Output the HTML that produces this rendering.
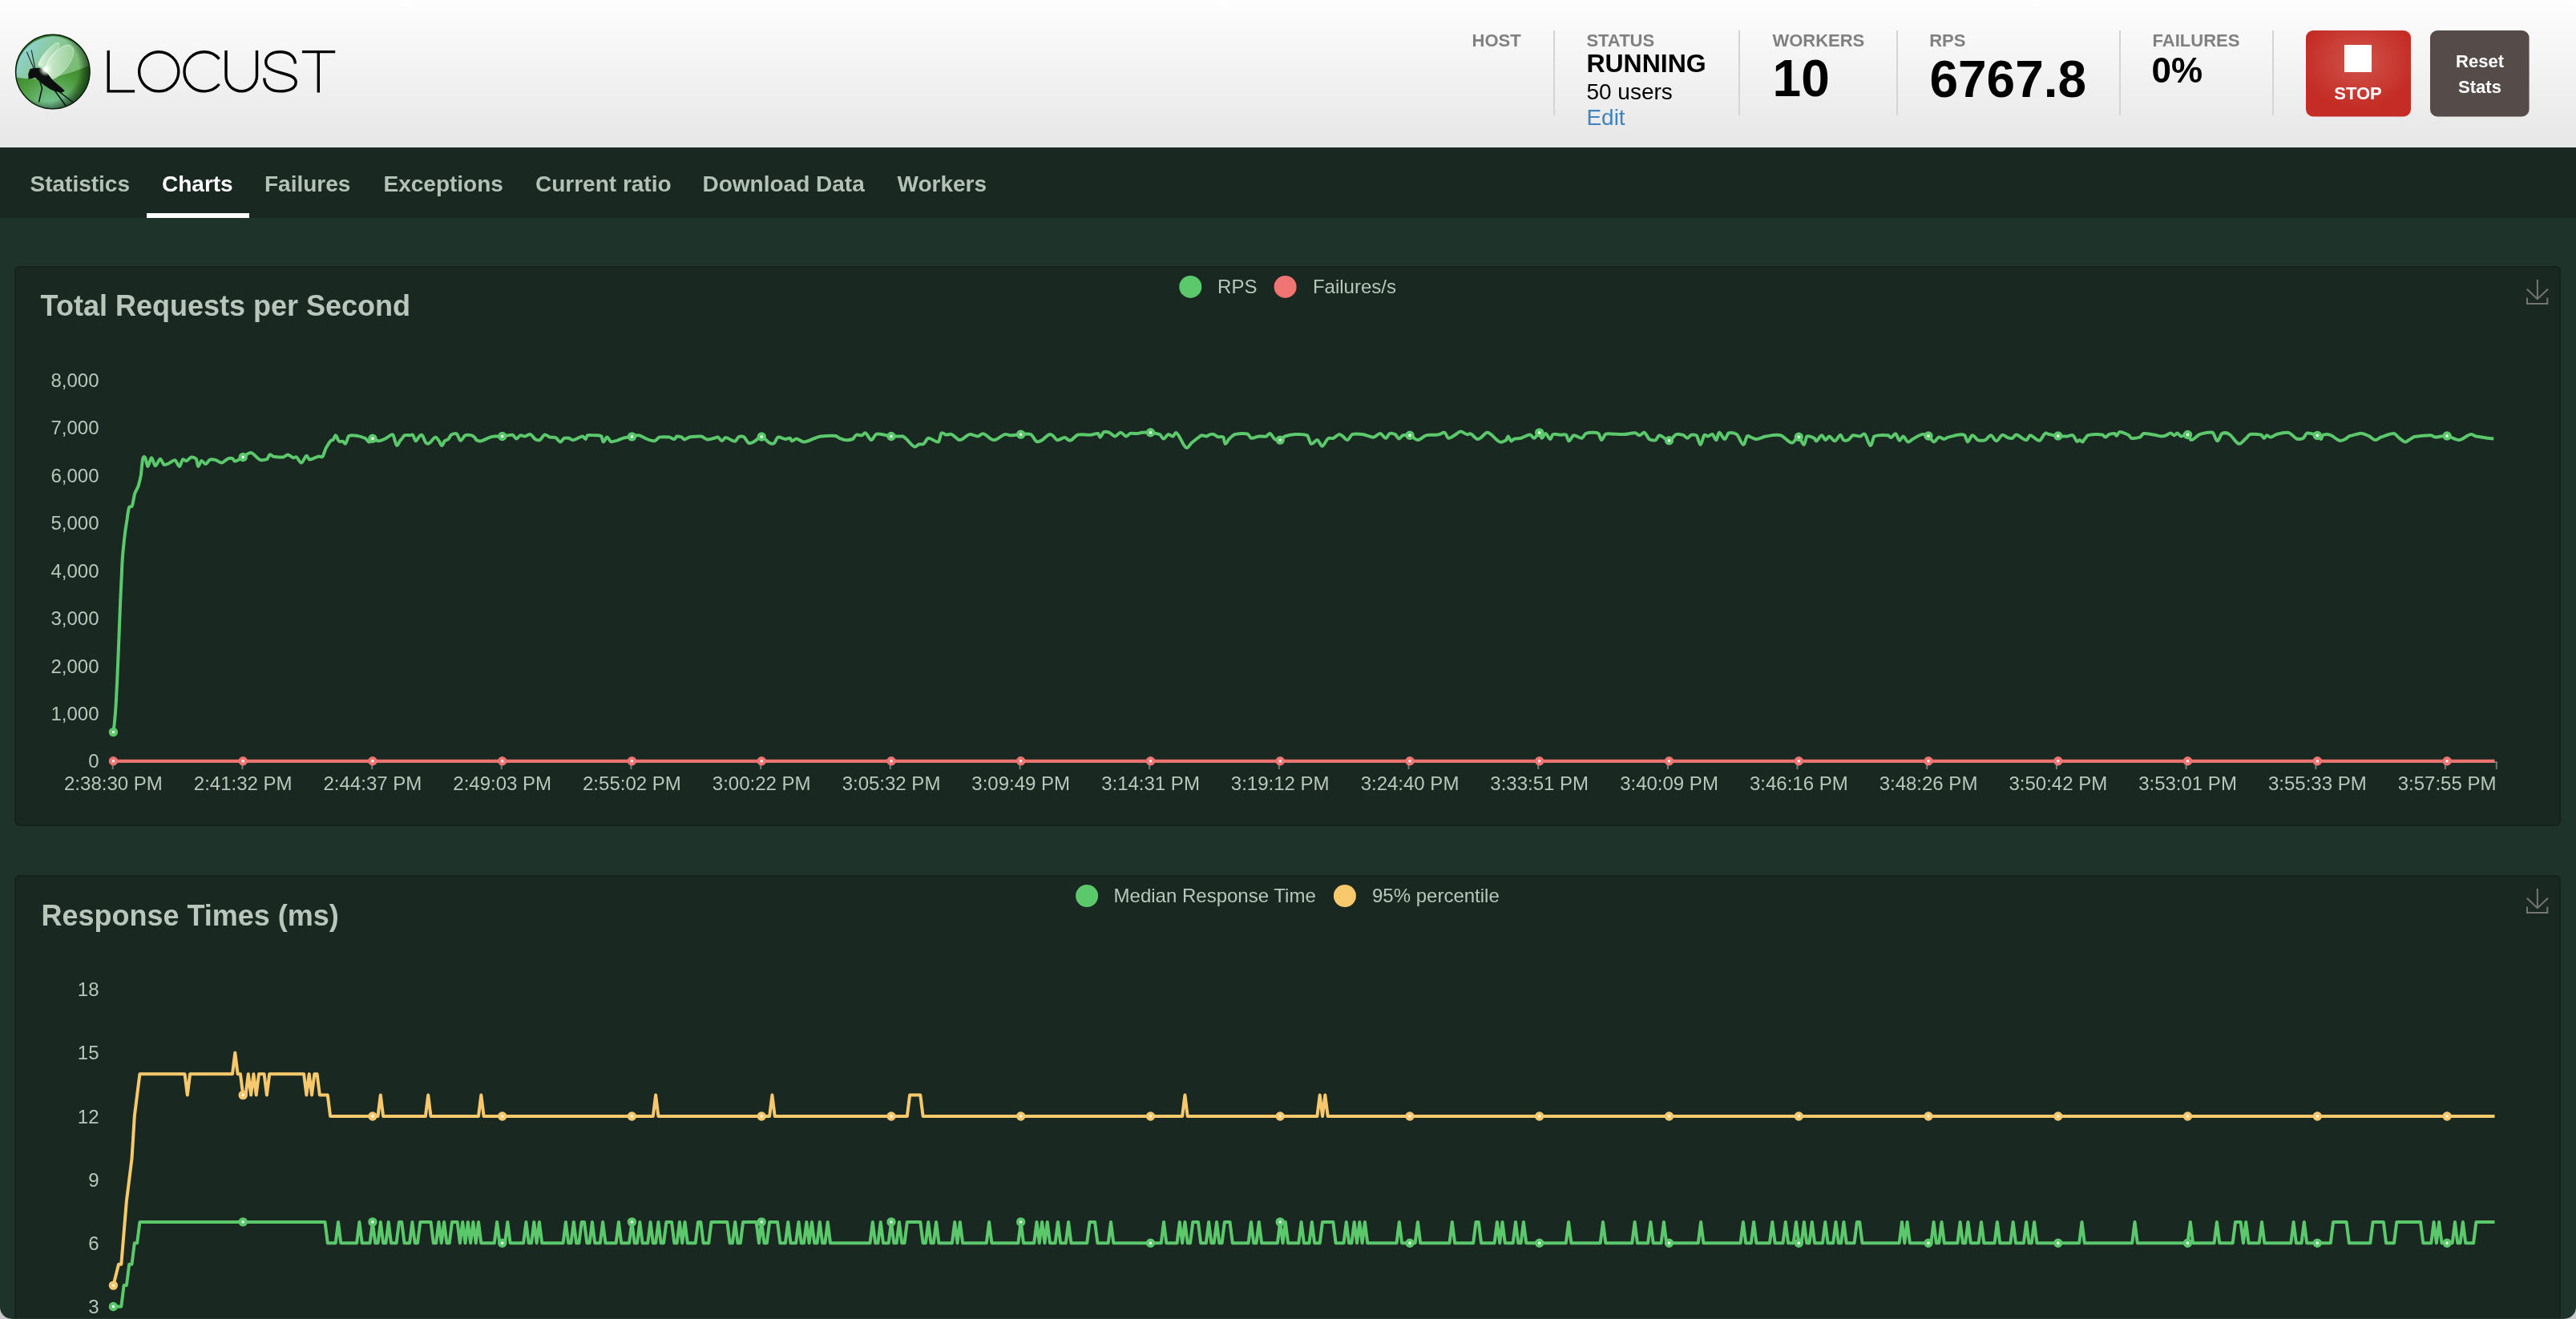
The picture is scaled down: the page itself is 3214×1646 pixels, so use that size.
<!DOCTYPE html><html><head><meta charset="utf-8"><title>Locust</title><style>
html,body{margin:0;padding:0;}
body{width:3214px;height:1646px;overflow:hidden;position:relative;background:#1e332a;font-family:"Liberation Sans",sans-serif;}
.abs{position:absolute;}
svg text{font-family:"Liberation Sans",sans-serif;}
svg{will-change:transform;}
</style></head><body>
<div class="abs" style="left:0;top:0;width:3214px;height:184px;background:linear-gradient(to bottom,#fefefe,#e6e6e6);"></div>
<div class="abs" style="left:0;top:184px;width:3214px;height:88px;background:#1a2822;"></div>
<div class="abs" style="left:18px;top:332px;width:3177px;height:699px;background:#1a2822;border-radius:7px;box-shadow:inset 0 0 0 2px #16231d;"></div>
<div class="abs" style="left:18px;top:1092px;width:3177px;height:700px;background:#1a2822;border-radius:7px;box-shadow:inset 0 0 0 2px #16231d;"></div>
<svg class="abs" style="left:0;top:0" width="3214" height="1646" viewBox="0 0 3214 1646"><defs><radialGradient id="stopg" cx="0.5" cy="0.36" r="0.55"><stop offset="0" stop-color="#d0544b"/><stop offset="1" stop-color="#c42c25"/></radialGradient><radialGradient id="orb" cx="0.35" cy="0.3" r="0.8"><stop offset="0" stop-color="#a8dcc4"/><stop offset="0.45" stop-color="#76c07a"/><stop offset="0.8" stop-color="#3f9a48"/><stop offset="1" stop-color="#2f7a3a"/></radialGradient><linearGradient id="orbhi" x1="0" y1="0" x2="0" y2="1"><stop offset="0" stop-color="#c8f0e8" stop-opacity="0.7"/><stop offset="1" stop-color="#9ad89a" stop-opacity="0.15"/></linearGradient><radialGradient id="wingg" cx="0.3" cy="0.8" r="0.9"><stop offset="0" stop-color="#ffffff" stop-opacity="0.95"/><stop offset="0.5" stop-color="#e6f7e0" stop-opacity="0.55"/><stop offset="1" stop-color="#d0efc8" stop-opacity="0.25"/></radialGradient></defs><defs><radialGradient id="orbBase" cx="0.5" cy="1.0" r="0.7"><stop offset="0" stop-color="#7ccaa0"/><stop offset="0.3" stop-color="#6ab878"/><stop offset="0.65" stop-color="#4e9c3e"/><stop offset="1" stop-color="#3a822c"/></radialGradient><linearGradient id="orbCap" x1="0.05" y1="0.3" x2="0.95" y2="0.7"><stop offset="0" stop-color="#8fd3da"/><stop offset="0.4" stop-color="#8ac99a"/><stop offset="1" stop-color="#74b868"/></linearGradient><radialGradient id="orbEdge" cx="0.4" cy="0.45" r="0.58"><stop offset="0.78" stop-color="#000" stop-opacity="0"/><stop offset="1" stop-color="#06200a" stop-opacity="0.6"/></radialGradient><radialGradient id="glow" cx="0.5" cy="0.5" r="0.5"><stop offset="0" stop-color="#ffffff" stop-opacity="1"/><stop offset="0.3" stop-color="#f4fff2" stop-opacity="0.9"/><stop offset="1" stop-color="#d8f5d0" stop-opacity="0"/></radialGradient><linearGradient id="wing" x1="0" y1="1" x2="0.5" y2="0"><stop offset="0" stop-color="#ffffff" stop-opacity="0.85"/><stop offset="0.55" stop-color="#e6f7e2" stop-opacity="0.55"/><stop offset="1" stop-color="#d6f0d2" stop-opacity="0.35"/></linearGradient></defs><circle cx="65.8" cy="89.5" r="46.5" fill="url(#orbBase)"/><path d="M20.3,96.5 A46.5,46.5 0 0 1 111.9,81.5 Q62,104 20.3,96.5 Z" fill="url(#orbCap)"/><circle cx="65.8" cy="89.5" r="46.5" fill="url(#orbEdge)"/><ellipse cx="60.9" cy="68" rx="5" ry="19" transform="rotate(41 60.9 68)" fill="url(#wing)" stroke="#f0fff0" stroke-opacity="0.55" stroke-width="0.8"/><ellipse cx="73" cy="78" rx="12" ry="26" transform="rotate(38 73 78)" fill="url(#wing)" stroke="#f0fff0" stroke-opacity="0.55" stroke-width="0.8"/><path d="M37.5,86 C42,85 47,84.5 51.4,85.2 C55,86.5 60,92 64.3,98.3 C68,102.5 72,105.5 76,108.8 L80.8,113.2 L77.5,115.4 C74,115 71,114.6 67.5,113.6 C62.5,111.5 59,109 55.5,106.5 C52,104 49.5,101.5 47,99.5 C45.5,98 44.5,97 43.5,96.8 L40,98 L35.5,98.8 L35.3,92 Z" fill="#0d0f0e"/><circle cx="57" cy="86.5" r="9" fill="url(#glow)"/><path d="M42.5,86 L33.3,64.6 M43.8,85.5 L39.2,62.5" stroke="#1c1c2c" stroke-width="1.1" fill="none"/><path d="M49,99 L52.5,110 L48.5,127.5 M68.3,113 L82.5,132.5 M73.3,114 L90.8,127.5" stroke="#101020" stroke-width="1.5" fill="none"/><circle cx="65.8" cy="89.5" r="46.2" fill="none" stroke="#0b1f10" stroke-width="1.5"/><g fill="none" stroke="#000" stroke-width="3.4"><path d="M135.2,63 V113.9 H168.1"/><circle cx="198.2" cy="89.3" r="24.6"/><path d="M273.5,73.6 A24.6,24.6 0 1 0 273.5,105"/><path d="M282,63 V94.6 A19.25,19.25 0 0 0 320.5,94.6 V63"/><path d="M368.3,79.5 C368.3,70 360,64.7 349.5,64.7 C338,64.7 331.7,70.5 331.7,77.5 C331.7,85 338,87.5 349,90.5 C362,94 369.2,96 369.2,102.5 C369.2,110 361,113.9 349.5,113.9 C337,113.9 329.8,107.5 329.8,97.5"/><path d="M376.9,64.6 H418.2 M397.3,63 V115.6"/></g><rect x="1938" y="38" width="2" height="106" fill="#d4d4d4"/><rect x="2169" y="38" width="2" height="106" fill="#d4d4d4"/><rect x="2366" y="38" width="2" height="106" fill="#d4d4d4"/><rect x="2644" y="38" width="2" height="106" fill="#d4d4d4"/><rect x="2835" y="38" width="2" height="106" fill="#d4d4d4"/><text x="1836.5" y="58" font-size="22" font-weight="700" fill="#808080" text-anchor="start" >HOST</text><text x="1979.4" y="58" font-size="22" font-weight="700" fill="#808080" text-anchor="start" >STATUS</text><text x="2211.4" y="58" font-size="22" font-weight="700" fill="#808080" text-anchor="start" >WORKERS</text><text x="2407.2" y="58" font-size="22" font-weight="700" fill="#808080" text-anchor="start" >RPS</text><text x="2685.6" y="58" font-size="22" font-weight="700" fill="#808080" text-anchor="start" >FAILURES</text><text x="1979.4" y="90" font-size="32" font-weight="700" fill="#000" text-anchor="start" >RUNNING</text><text x="1979.4" y="124" font-size="28" font-weight="400" fill="#000" text-anchor="start" >50 users</text><text x="1979.4" y="156" font-size="28" font-weight="400" fill="#3f84bf" text-anchor="start" >Edit</text><text x="2211.6" y="120" font-size="64" font-weight="700" fill="#000" text-anchor="start" >10</text><text x="2407.4" y="120.5" font-size="64" font-weight="700" fill="#000" text-anchor="start" >6767.8</text><text x="2684.6" y="103" font-size="44" font-weight="700" fill="#000" text-anchor="start" >0%</text><rect x="2877" y="38" width="131" height="107.5" rx="9" fill="url(#stopg)"/><rect x="2925" y="56" width="34" height="34" fill="#fff"/><text x="2942" y="124" font-size="22" font-weight="700" fill="#fff" text-anchor="middle" >STOP</text><rect x="3032" y="38" width="123.6" height="107.5" rx="9" fill="#554b49"/><text x="3094" y="84" font-size="22" font-weight="700" fill="#fff" text-anchor="middle" >Reset</text><text x="3094" y="116" font-size="22" font-weight="700" fill="#fff" text-anchor="middle" >Stats</text><text x="37.5" y="238.5" font-size="28" font-weight="700" fill="#b3c1b7" text-anchor="start" >Statistics</text><text x="202" y="238.5" font-size="28" font-weight="700" fill="#fff" text-anchor="start" >Charts</text><text x="330" y="238.5" font-size="28" font-weight="700" fill="#b3c1b7" text-anchor="start" >Failures</text><text x="478.5" y="238.5" font-size="28" font-weight="700" fill="#b3c1b7" text-anchor="start" >Exceptions</text><text x="668" y="238.5" font-size="28" font-weight="700" fill="#b3c1b7" text-anchor="start" >Current ratio</text><text x="876.5" y="238.5" font-size="28" font-weight="700" fill="#b3c1b7" text-anchor="start" >Download Data</text><text x="1119.5" y="238.5" font-size="28" font-weight="700" fill="#b3c1b7" text-anchor="start" >Workers</text><rect x="183" y="266" width="128" height="6" fill="#fff"/><text x="50.6" y="394.2" font-size="36" font-weight="700" fill="#b8c6bc" text-anchor="start" >Total Requests per Second</text><text x="51.4" y="1155" font-size="36" font-weight="700" fill="#b8c6bc" text-anchor="start" >Response Times (ms)</text><circle cx="1485.3" cy="357.9" r="14" fill="#5bc86b"/><text x="1519.1" y="366.1" font-size="24" font-weight="400" fill="#b8c6bc" text-anchor="start" >RPS</text><circle cx="1603.6" cy="357.9" r="14" fill="#ef7472"/><text x="1637.9" y="366.1" font-size="24" font-weight="400" fill="#b8c6bc" text-anchor="start" >Failures/s</text><circle cx="1356.1" cy="1118" r="14" fill="#5bc86b"/><text x="1389.6" y="1126" font-size="24" font-weight="400" fill="#b8c6bc" text-anchor="start" >Median Response Time</text><circle cx="1677.9" cy="1118" r="14" fill="#f7c96c"/><text x="1712" y="1126" font-size="24" font-weight="400" fill="#b8c6bc" text-anchor="start" >95% percentile</text><g fill="none" stroke="#737674" stroke-width="2"><path d="M3165.9,349 V373 M3152.8,360.7 L3165.9,373.2 L3179,360.7 M3153,371.5 V379 H3178.3 V371.5"/></g><g fill="none" stroke="#737674" stroke-width="2"><path d="M3165.9,1109 V1133 M3152.8,1120.7 L3165.9,1133.2 L3179,1120.7 M3153,1131.5 V1139 H3178.3 V1131.5"/></g><text x="123.5" y="958.4" font-size="24" font-weight="400" fill="#b8c6bc" text-anchor="end" >0</text><text x="123.5" y="898.9" font-size="24" font-weight="400" fill="#b8c6bc" text-anchor="end" >1,000</text><text x="123.5" y="839.5" font-size="24" font-weight="400" fill="#b8c6bc" text-anchor="end" >2,000</text><text x="123.5" y="780.0" font-size="24" font-weight="400" fill="#b8c6bc" text-anchor="end" >3,000</text><text x="123.5" y="720.6" font-size="24" font-weight="400" fill="#b8c6bc" text-anchor="end" >4,000</text><text x="123.5" y="661.1" font-size="24" font-weight="400" fill="#b8c6bc" text-anchor="end" >5,000</text><text x="123.5" y="601.7" font-size="24" font-weight="400" fill="#b8c6bc" text-anchor="end" >6,000</text><text x="123.5" y="542.2" font-size="24" font-weight="400" fill="#b8c6bc" text-anchor="end" >7,000</text><text x="123.5" y="482.8" font-size="24" font-weight="400" fill="#b8c6bc" text-anchor="end" >8,000</text><text x="123.5" y="1639.1" font-size="24" font-weight="400" fill="#b8c6bc" text-anchor="end" >3</text><text x="123.5" y="1559.9" font-size="24" font-weight="400" fill="#b8c6bc" text-anchor="end" >6</text><text x="123.5" y="1480.8" font-size="24" font-weight="400" fill="#b8c6bc" text-anchor="end" >9</text><text x="123.5" y="1401.6" font-size="24" font-weight="400" fill="#b8c6bc" text-anchor="end" >12</text><text x="123.5" y="1322.4" font-size="24" font-weight="400" fill="#b8c6bc" text-anchor="end" >15</text><text x="123.5" y="1243.2" font-size="24" font-weight="400" fill="#b8c6bc" text-anchor="end" >18</text><text x="141.4" y="986.3" font-size="24" font-weight="400" fill="#b8c6bc" text-anchor="middle" >2:38:30 PM</text><text x="303.2" y="986.3" font-size="24" font-weight="400" fill="#b8c6bc" text-anchor="middle" >2:41:32 PM</text><text x="464.9" y="986.3" font-size="24" font-weight="400" fill="#b8c6bc" text-anchor="middle" >2:44:37 PM</text><text x="626.7" y="986.3" font-size="24" font-weight="400" fill="#b8c6bc" text-anchor="middle" >2:49:03 PM</text><text x="788.4" y="986.3" font-size="24" font-weight="400" fill="#b8c6bc" text-anchor="middle" >2:55:02 PM</text><text x="950.2" y="986.3" font-size="24" font-weight="400" fill="#b8c6bc" text-anchor="middle" >3:00:22 PM</text><text x="1112.0" y="986.3" font-size="24" font-weight="400" fill="#b8c6bc" text-anchor="middle" >3:05:32 PM</text><text x="1273.7" y="986.3" font-size="24" font-weight="400" fill="#b8c6bc" text-anchor="middle" >3:09:49 PM</text><text x="1435.5" y="986.3" font-size="24" font-weight="400" fill="#b8c6bc" text-anchor="middle" >3:14:31 PM</text><text x="1597.2" y="986.3" font-size="24" font-weight="400" fill="#b8c6bc" text-anchor="middle" >3:19:12 PM</text><text x="1759.0" y="986.3" font-size="24" font-weight="400" fill="#b8c6bc" text-anchor="middle" >3:24:40 PM</text><text x="1920.7" y="986.3" font-size="24" font-weight="400" fill="#b8c6bc" text-anchor="middle" >3:33:51 PM</text><text x="2082.5" y="986.3" font-size="24" font-weight="400" fill="#b8c6bc" text-anchor="middle" >3:40:09 PM</text><text x="2244.3" y="986.3" font-size="24" font-weight="400" fill="#b8c6bc" text-anchor="middle" >3:46:16 PM</text><text x="2406.0" y="986.3" font-size="24" font-weight="400" fill="#b8c6bc" text-anchor="middle" >3:48:26 PM</text><text x="2567.8" y="986.3" font-size="24" font-weight="400" fill="#b8c6bc" text-anchor="middle" >3:50:42 PM</text><text x="2729.5" y="986.3" font-size="24" font-weight="400" fill="#b8c6bc" text-anchor="middle" >3:53:01 PM</text><text x="2891.3" y="986.3" font-size="24" font-weight="400" fill="#b8c6bc" text-anchor="middle" >3:55:33 PM</text><text x="3053.1" y="986.3" font-size="24" font-weight="400" fill="#b8c6bc" text-anchor="middle" >3:57:55 PM</text><rect x="139.4" y="950" width="2976.4" height="2" fill="#6d7a73"/><rect x="139.7" y="951" width="2" height="9" fill="#6d7a73"/><rect x="301.4" y="951" width="2" height="9" fill="#6d7a73"/><rect x="463.1" y="951" width="2" height="9" fill="#6d7a73"/><rect x="624.7" y="951" width="2" height="9" fill="#6d7a73"/><rect x="786.4" y="951" width="2" height="9" fill="#6d7a73"/><rect x="948.1" y="951" width="2" height="9" fill="#6d7a73"/><rect x="1109.8" y="951" width="2" height="9" fill="#6d7a73"/><rect x="1271.5" y="951" width="2" height="9" fill="#6d7a73"/><rect x="1433.1" y="951" width="2" height="9" fill="#6d7a73"/><rect x="1594.8" y="951" width="2" height="9" fill="#6d7a73"/><rect x="1756.5" y="951" width="2" height="9" fill="#6d7a73"/><rect x="1918.2" y="951" width="2" height="9" fill="#6d7a73"/><rect x="2079.9" y="951" width="2" height="9" fill="#6d7a73"/><rect x="2241.5" y="951" width="2" height="9" fill="#6d7a73"/><rect x="2403.2" y="951" width="2" height="9" fill="#6d7a73"/><rect x="2564.9" y="951" width="2" height="9" fill="#6d7a73"/><rect x="2726.6" y="951" width="2" height="9" fill="#6d7a73"/><rect x="2888.3" y="951" width="2" height="9" fill="#6d7a73"/><rect x="3049.9" y="951" width="2" height="9" fill="#6d7a73"/><rect x="3113.8" y="951" width="2" height="9" fill="#6d7a73"/><path d="M141.4,949.7 L3112.5,949.7" fill="none" stroke="#ef7472" stroke-width="4" stroke-linejoin="round" stroke-linecap="butt"/><circle cx="141.4" cy="949.7" r="3.7" fill="#fff" stroke="#ef7472" stroke-width="4"/><circle cx="303.2" cy="949.7" r="3.7" fill="#fff" stroke="#ef7472" stroke-width="4"/><circle cx="464.9" cy="949.7" r="3.7" fill="#fff" stroke="#ef7472" stroke-width="4"/><circle cx="626.7" cy="949.7" r="3.7" fill="#fff" stroke="#ef7472" stroke-width="4"/><circle cx="788.4" cy="949.7" r="3.7" fill="#fff" stroke="#ef7472" stroke-width="4"/><circle cx="950.2" cy="949.7" r="3.7" fill="#fff" stroke="#ef7472" stroke-width="4"/><circle cx="1112.0" cy="949.7" r="3.7" fill="#fff" stroke="#ef7472" stroke-width="4"/><circle cx="1273.7" cy="949.7" r="3.7" fill="#fff" stroke="#ef7472" stroke-width="4"/><circle cx="1435.5" cy="949.7" r="3.7" fill="#fff" stroke="#ef7472" stroke-width="4"/><circle cx="1597.2" cy="949.7" r="3.7" fill="#fff" stroke="#ef7472" stroke-width="4"/><circle cx="1759.0" cy="949.7" r="3.7" fill="#fff" stroke="#ef7472" stroke-width="4"/><circle cx="1920.7" cy="949.7" r="3.7" fill="#fff" stroke="#ef7472" stroke-width="4"/><circle cx="2082.5" cy="949.7" r="3.7" fill="#fff" stroke="#ef7472" stroke-width="4"/><circle cx="2244.3" cy="949.7" r="3.7" fill="#fff" stroke="#ef7472" stroke-width="4"/><circle cx="2406.0" cy="949.7" r="3.7" fill="#fff" stroke="#ef7472" stroke-width="4"/><circle cx="2567.8" cy="949.7" r="3.7" fill="#fff" stroke="#ef7472" stroke-width="4"/><circle cx="2729.5" cy="949.7" r="3.7" fill="#fff" stroke="#ef7472" stroke-width="4"/><circle cx="2891.3" cy="949.7" r="3.7" fill="#fff" stroke="#ef7472" stroke-width="4"/><circle cx="3053.1" cy="949.7" r="3.7" fill="#fff" stroke="#ef7472" stroke-width="4"/><path d="M141.4,913.6 C142.8,904.2 144.2,893.9 145.6,860.0 C147.6,826.1 149.7,752.3 151.7,720.0 C152.7,687.7 153.8,688.0 154.8,675.3 C156.1,662.6 157.4,654.6 158.7,647.3 C159.5,640.0 160.2,636.3 161.0,633.4 C162.3,630.5 163.7,634.0 165.0,631.0 C166.0,628.0 167.0,620.6 168.0,616.3 C169.6,612.0 171.1,610.3 172.7,606.2 C173.7,602.1 174.8,598.8 175.8,593.0 C176.6,587.2 177.3,576.6 178.1,572.8 C179.1,569.0 180.2,569.6 181.2,571.2 C182.2,572.8 183.3,582.1 184.3,582.1 C185.9,582.1 187.4,571.3 189.0,571.2 C190.6,571.1 192.1,581.0 193.7,581.3 C195.8,581.6 197.8,573.1 199.9,572.8 C201.4,572.5 203.0,578.9 204.5,579.8 C206.6,580.7 208.6,579.2 210.7,578.2 C213.3,577.2 215.9,573.6 218.5,574.3 C220.3,575.0 222.1,582.2 223.9,582.1 C225.2,582.0 226.5,574.8 227.8,573.6 C229.4,572.4 230.9,575.6 232.5,575.1 C234.6,574.6 236.6,570.9 238.7,570.5 C240.8,570.1 242.8,570.8 244.9,572.8 C245.7,574.8 246.4,581.7 247.2,582.1 C248.5,582.5 249.8,575.6 251.1,575.1 C252.9,574.6 254.8,579.3 256.6,579.0 C258.4,578.7 260.2,574.4 262.0,573.6 C264.6,572.8 267.2,573.6 269.8,574.3 C272.1,575.0 274.4,577.8 276.7,577.5 C279.0,577.2 281.4,573.8 283.7,572.8 C285.8,571.8 287.8,571.5 289.9,572.0 C290.9,572.5 292.0,575.9 293.0,575.6 C296.4,575.3 299.7,572.4 303.1,570.5 C306.5,568.6 309.8,564.5 313.2,565.0 C316.8,565.5 320.5,572.2 324.1,573.6 C327.2,575.0 330.3,573.9 333.4,572.8 C334.4,571.7 335.5,567.9 336.5,567.4 C338.1,566.9 339.6,569.2 341.2,569.7 C345.3,570.2 349.5,570.9 353.6,570.5 C355.4,570.1 357.2,567.3 359.0,567.4 C361.3,567.5 363.7,570.7 366.0,571.2 C367.3,571.7 368.6,569.4 369.9,570.5 C372.0,571.6 374.0,577.8 376.1,577.5 C378.2,577.2 380.2,569.6 382.3,568.9 C383.6,568.2 384.9,573.5 386.2,573.6 C389.8,573.7 393.5,570.4 397.1,569.7 C398.9,569.0 400.7,571.5 402.5,569.7 C403.8,567.9 405.1,563.0 406.4,559.6 C408.5,556.2 410.5,552.2 412.6,550.3 C413.6,548.4 414.7,549.9 415.7,548.7 C416.7,547.5 417.8,543.0 418.8,543.3 C420.1,543.6 421.4,549.0 422.7,550.3 C424.5,551.6 426.3,550.5 428.1,551.0 C429.1,551.5 430.2,554.6 431.2,553.4 C432.5,552.2 433.8,545.7 435.1,544.1 C439.0,542.5 442.9,543.6 446.8,544.1 C449.9,544.6 453.0,545.9 456.1,547.2 C457.7,548.5 459.2,551.8 460.8,551.8 C462.2,551.8 463.5,547.5 464.9,547.2 C467.1,546.9 469.4,550.0 471.6,550.3 C473.7,550.6 475.7,549.4 477.8,548.7 C479.4,548.0 480.9,547.5 482.5,546.4 C485.1,545.3 487.6,540.9 490.2,542.5 C491.8,544.1 493.3,554.5 494.9,555.7 C496.5,556.9 498.0,550.7 499.6,549.5 C499.7,548.3 499.9,550.2 500.0,549.1 C501.6,548.0 503.1,544.3 504.7,543.3 C507.0,542.3 509.3,543.4 511.6,543.3 C512.8,543.2 514.0,541.6 515.1,542.8 C516.3,544.1 517.5,550.0 518.6,550.3 C520.2,550.6 521.7,545.7 523.3,544.5 C524.5,543.2 525.6,541.9 526.8,543.3 C528.3,544.7 529.9,551.0 531.4,552.6 C533.0,554.2 534.6,553.8 536.1,552.6 C538.4,551.4 540.8,546.0 543.1,545.6 C544.6,545.2 546.2,548.4 547.8,550.3 C548.9,552.1 550.1,556.1 551.2,556.1 C552.4,556.1 553.6,551.7 554.7,550.3 C556.3,548.9 557.8,549.3 559.4,548.0 C560.6,546.6 561.7,543.7 562.9,542.6 C565.2,541.5 567.6,540.2 569.9,541.4 C571.4,542.7 573.0,549.5 574.5,549.8 C576.5,550.1 578.4,544.4 580.4,543.3 C583.1,542.2 585.8,542.9 588.5,543.3 C589.7,543.7 590.8,544.6 592.0,545.6 C592.8,546.6 593.6,548.3 594.3,549.1 C596.3,549.9 598.2,550.9 600.2,550.3 C604.0,549.7 607.9,546.6 611.8,545.6 C614.1,544.6 616.5,544.7 618.8,544.5 C621.5,544.3 624.2,544.7 627.0,544.5 C631.2,544.2 635.5,542.3 639.8,542.8 C641.3,543.4 642.9,547.4 644.4,547.5 C646.0,547.6 647.5,543.8 649.1,543.3 C651.0,542.8 653.0,544.7 654.9,544.5 C657.2,544.3 659.6,541.5 661.9,542.1 C663.8,542.7 665.8,546.7 667.7,548.0 C669.7,549.2 671.6,550.1 673.5,549.1 C675.5,548.2 677.4,543.2 679.4,542.6 C681.7,542.0 684.0,545.0 686.3,545.6 C688.7,546.2 691.0,545.1 693.3,546.1 C695.3,547.1 697.2,551.3 699.2,551.4 C700.7,551.6 702.3,547.6 703.8,546.8 C705.8,546.0 707.7,546.4 709.6,546.8 C711.6,547.2 713.5,549.5 715.5,549.1 C719.3,548.7 723.2,544.7 727.1,544.5 C728.3,544.3 729.4,548.2 730.6,548.0 C731.4,547.7 732.2,544.1 732.9,543.3 C736.0,542.5 739.1,543.1 742.3,543.3 C745.0,543.5 747.7,543.0 750.4,544.5 C751.2,545.9 752.0,551.2 752.7,551.4 C754.3,551.7 755.8,545.7 757.4,545.6 C758.9,545.5 760.5,550.3 762.1,551.0 C764.8,551.7 767.5,550.3 770.2,549.6 C772.5,548.8 774.9,547.6 777.2,546.8 C780.9,546.0 784.6,545.5 788.4,544.9 C791.2,544.3 794.1,542.8 797.0,543.3 C800.5,543.8 804.0,546.7 807.5,548.0 C810.6,549.2 813.7,550.7 816.8,550.3 C818.7,549.9 820.7,546.4 822.6,545.6 C826.9,544.8 831.2,545.2 835.4,545.6 C837.4,546.0 839.3,548.2 841.3,548.0 C842.4,547.7 843.6,544.9 844.7,544.5 C846.7,544.1 848.6,544.9 850.6,545.6 C851.7,546.3 852.9,548.4 854.1,548.4 C856.0,548.4 857.9,546.3 859.9,545.6 C864.9,544.9 870.0,544.0 875.0,544.5 C877.4,544.9 879.7,548.0 882.0,548.4 C885.1,548.8 888.2,547.3 891.3,546.8 C892.9,546.3 894.4,545.0 896.0,545.6 C897.5,546.2 899.1,550.2 900.7,550.3 C902.2,550.4 903.8,546.0 905.3,546.1 C909.2,546.2 913.1,550.9 917.0,550.7 C918.5,550.6 920.1,546.1 921.6,545.2 C923.9,544.3 926.3,544.3 928.6,545.6 C930.3,546.9 932.0,551.6 933.7,552.6 C935.9,553.6 938.1,552.8 940.3,551.4 C943.6,550.1 946.9,544.7 950.3,544.9 C953.5,545.1 956.8,551.2 960.1,552.6 C962.0,554.0 963.9,554.3 965.9,553.1 C967.4,551.9 969.0,546.5 970.5,545.6 C973.6,544.7 976.7,547.7 979.9,548.0 C981.8,548.2 983.7,546.4 985.7,546.8 C986.5,547.2 987.2,550.2 988.0,550.3 C989.9,550.4 991.9,547.3 993.8,547.5 C996.9,547.7 1000.0,551.6 1003.1,551.4 C1007.8,551.3 1012.5,548.0 1017.1,546.8 C1019.5,545.6 1021.8,544.9 1024.1,544.5 C1030.3,544.0 1036.5,543.6 1042.7,544.0 C1044.3,544.4 1045.8,545.9 1047.4,546.8 C1049.7,547.7 1052.1,548.9 1054.4,549.1 C1057.5,549.3 1060.6,549.1 1063.7,548.0 C1065.3,546.9 1066.8,543.6 1068.4,542.8 C1070.7,542.0 1073.0,543.7 1075.4,543.3 C1076.9,542.9 1078.5,539.5 1080.0,540.5 C1082.3,541.5 1084.7,548.8 1087.0,549.1 C1088.9,549.4 1090.9,543.4 1092.8,542.1 C1095.2,540.9 1097.6,541.9 1100.0,542.1 C1101.9,542.3 1103.9,542.9 1105.8,543.3 C1107.8,543.7 1109.7,544.3 1111.6,544.5 C1115.5,544.7 1119.4,544.3 1123.3,544.5 C1124.8,544.7 1126.4,543.4 1128.0,545.6 C1132.2,547.9 1136.5,555.7 1140.8,557.3 C1142.7,558.8 1144.6,555.1 1146.6,554.5 C1148.5,553.9 1150.5,555.1 1152.4,553.8 C1154.4,552.4 1156.3,547.2 1158.2,546.8 C1162.5,546.4 1166.8,552.5 1171.0,551.4 C1172.2,550.3 1173.4,542.0 1174.5,540.5 C1176.5,538.9 1178.4,542.3 1180.4,542.6 C1182.7,542.9 1185.0,541.0 1187.4,542.1 C1190.8,543.3 1194.3,549.1 1197.8,549.1 C1201.7,549.1 1205.6,542.9 1209.5,542.1 C1213.0,541.3 1216.5,544.6 1220.0,544.5 C1222.3,544.3 1224.6,540.6 1227.0,541.4 C1231.2,542.2 1235.5,549.0 1239.8,549.1 C1244.4,549.2 1249.1,543.1 1253.7,542.1 C1256.1,541.1 1258.4,543.3 1260.7,543.3 C1265.0,543.3 1269.3,542.3 1273.5,542.1 C1277.8,541.9 1282.1,540.6 1286.3,542.1 C1288.7,543.7 1291.0,549.8 1293.3,551.0 C1295.7,552.2 1298.0,550.6 1300.3,549.1 C1303.0,547.6 1305.8,543.6 1308.5,542.6 C1310.0,541.6 1311.6,542.2 1313.1,543.3 C1315.1,544.4 1317.0,548.6 1319.0,549.1 C1322.1,549.6 1325.2,546.0 1328.3,546.1 C1330.6,546.2 1332.9,550.2 1335.3,549.6 C1338.4,549.0 1341.5,543.8 1344.6,542.6 C1350.0,541.4 1355.5,543.1 1360.9,542.8 C1364.0,542.5 1367.1,540.5 1370.2,541.0 C1371.0,541.5 1371.8,545.9 1372.5,545.6 C1374.1,545.3 1375.6,540.1 1377.2,539.1 C1379.5,538.1 1381.9,538.9 1384.2,539.8 C1386.5,540.7 1388.8,544.5 1391.2,544.5 C1393.5,544.5 1395.8,539.8 1398.2,539.8 C1400.5,539.8 1402.8,544.3 1405.1,544.5 C1406.7,544.7 1408.3,541.6 1409.8,541.0 C1412.9,540.4 1416.0,541.2 1419.1,541.0 C1421.1,540.8 1423.0,540.0 1424.9,539.8 C1428.4,539.6 1431.9,539.4 1435.4,539.8 C1439.3,540.2 1443.2,540.8 1447.1,542.1 C1448.6,543.5 1450.2,547.5 1451.7,547.5 C1453.7,547.5 1455.6,542.7 1457.6,542.1 C1459.5,541.6 1461.4,544.7 1463.4,544.5 C1464.9,544.2 1466.5,538.1 1468.0,540.5 C1471.9,542.9 1475.8,556.3 1479.7,558.4 C1482.0,560.6 1484.3,554.9 1486.7,552.6 C1489.8,550.4 1492.9,547.3 1496.0,545.6 C1497.2,544.0 1498.3,543.5 1499.5,543.3 C1501.4,543.1 1503.4,544.7 1505.3,544.5 C1506.9,544.3 1508.4,542.5 1510.0,542.1 C1511.5,541.7 1513.1,541.6 1514.6,542.1 C1516.2,542.7 1517.7,544.5 1519.3,545.2 C1521.6,545.8 1523.9,544.1 1526.3,545.6 C1527.1,547.1 1527.8,553.4 1528.6,553.8 C1530.2,554.2 1531.7,550.0 1533.3,548.0 C1535.6,545.9 1537.9,543.3 1540.3,542.1 C1545.7,541.0 1551.1,540.6 1556.6,541.4 C1558.1,542.2 1559.7,546.3 1561.2,546.8 C1564.3,547.3 1567.4,544.9 1570.5,544.5 C1573.6,544.1 1576.7,545.1 1579.9,544.5 C1581.4,543.8 1583.0,540.4 1584.5,541.0 C1586.5,541.6 1588.4,546.5 1590.3,548.0 C1592.7,549.4 1595.0,549.7 1597.3,549.1 C1599.3,548.5 1601.2,545.7 1603.1,544.5 C1607.4,543.2 1611.7,542.3 1616.0,542.1 C1621.0,541.9 1626.1,541.3 1631.1,543.3 C1632.7,545.3 1634.2,552.8 1635.8,553.8 C1638.5,554.8 1641.2,548.6 1643.9,549.1 C1645.8,549.6 1647.8,557.1 1649.7,556.8 C1652.1,556.5 1654.4,549.2 1656.7,547.5 C1659.0,545.7 1661.4,547.7 1663.7,546.8 C1666.0,545.9 1668.4,542.5 1670.7,542.1 C1672.2,541.7 1673.8,543.2 1675.4,544.5 C1677.3,545.7 1679.2,549.5 1681.2,549.1 C1683.1,548.7 1685.1,543.4 1687.0,542.1 C1691.3,540.9 1695.7,541.9 1700.0,542.1 C1701.6,542.3 1703.1,542.7 1704.7,543.3 C1707.8,543.9 1710.9,546.0 1714.0,545.6 C1716.7,545.2 1719.4,540.8 1722.1,541.0 C1724.5,541.2 1726.8,546.8 1729.1,546.8 C1730.7,546.8 1732.2,541.8 1733.8,541.0 C1736.1,540.1 1738.4,541.0 1740.8,542.1 C1742.3,543.3 1743.9,547.3 1745.4,547.5 C1747.0,547.7 1748.5,544.0 1750.1,543.3 C1753.2,542.6 1756.3,542.3 1759.4,543.3 C1762.5,544.3 1765.6,549.1 1768.7,549.1 C1772.2,549.1 1775.7,544.4 1779.2,543.3 C1782.3,542.2 1785.4,543.0 1788.5,542.8 C1790.8,542.6 1793.2,542.7 1795.5,542.1 C1797.8,541.6 1800.2,539.0 1802.5,539.8 C1804.0,540.6 1805.6,546.4 1807.2,546.8 C1810.3,547.2 1813.4,543.6 1816.5,542.1 C1818.4,540.7 1820.4,538.6 1822.3,538.6 C1825.0,538.6 1827.7,541.6 1830.4,542.1 C1832.0,542.6 1833.6,540.5 1835.1,541.4 C1837.4,542.4 1839.8,546.5 1842.1,547.5 C1843.6,548.4 1845.2,548.1 1846.8,546.8 C1849.9,545.4 1853.0,539.0 1856.1,539.8 C1861.1,540.6 1866.2,549.8 1871.2,551.4 C1873.9,553.1 1876.6,550.3 1879.4,549.1 C1880.1,547.9 1880.9,544.3 1881.7,544.5 C1882.9,544.7 1884.0,549.7 1885.2,550.3 C1886.3,550.9 1887.5,548.6 1888.7,548.0 C1891.8,547.3 1894.9,547.4 1898.0,546.8 C1899.5,546.2 1901.1,545.2 1902.7,544.5 C1905.0,543.7 1907.3,542.2 1909.6,542.6 C1911.2,543.0 1912.7,547.3 1914.3,546.8 C1916.5,546.3 1918.7,539.8 1920.8,539.8 C1921.8,539.8 1922.7,546.6 1923.6,546.8 C1925.2,547.0 1926.7,540.8 1928.3,541.0 C1930.2,541.2 1932.2,547.7 1934.1,548.0 C1935.3,548.2 1936.4,543.0 1937.6,542.1 C1940.7,541.2 1943.8,542.7 1946.9,542.8 C1949.2,542.9 1951.6,541.3 1953.9,542.6 C1955.1,543.9 1956.2,550.2 1957.4,550.3 C1959.3,550.4 1961.3,543.9 1963.2,543.3 C1966.7,542.7 1970.2,547.2 1973.7,546.8 C1975.3,546.4 1976.8,542.2 1978.4,541.0 C1981.9,539.7 1985.3,539.7 1988.8,539.8 C1990.8,539.9 1992.7,539.8 1994.7,541.4 C1995.8,543.1 1997.0,549.0 1998.2,549.1 C1999.7,549.2 2001.3,543.5 2002.8,542.1 C2005.1,540.8 2007.5,541.4 2009.8,541.4 C2015.2,541.4 2020.7,542.3 2026.1,542.1 C2030.8,541.9 2035.4,540.1 2040.1,540.3 C2042.0,540.5 2044.0,543.4 2045.9,543.3 C2047.9,543.2 2049.8,539.0 2051.7,539.8 C2053.7,540.6 2055.6,546.3 2057.6,548.0 C2060.3,549.6 2063.0,549.9 2065.7,549.1 C2067.3,548.3 2068.8,543.2 2070.4,543.3 C2074.4,543.4 2078.4,550.0 2082.5,549.8 C2085.4,549.6 2088.4,543.3 2091.3,542.1 C2094.4,541.0 2097.5,542.5 2100.7,543.3 C2102.2,544.1 2103.8,546.9 2105.3,546.8 C2106.9,546.7 2108.4,543.4 2110.0,542.8 C2112.3,542.3 2114.6,541.6 2117.0,543.8 C2118.5,545.9 2120.1,555.0 2121.6,554.9 C2123.2,554.9 2124.7,545.1 2126.3,543.3 C2127.8,541.5 2129.4,544.7 2130.9,544.5 C2132.9,544.3 2134.8,541.3 2136.8,542.1 C2138.3,542.9 2139.9,549.5 2141.4,549.1 C2142.6,548.7 2143.7,540.0 2144.9,539.8 C2147.2,539.6 2149.6,547.8 2151.9,548.0 C2153.5,548.1 2155.0,541.5 2156.6,540.5 C2160.1,539.5 2163.5,539.6 2167.0,542.1 C2169.8,544.7 2172.5,554.5 2175.2,554.9 C2176.7,555.3 2178.3,546.1 2179.9,544.5 C2181.4,542.8 2183.0,545.0 2184.5,545.6 C2186.8,546.2 2189.2,548.2 2191.5,548.0 C2195.4,547.7 2199.3,545.3 2203.1,544.5 C2209.4,543.6 2215.6,541.9 2221.8,543.3 C2226.4,544.7 2231.1,552.3 2235.8,552.6 C2238.6,552.9 2241.3,544.7 2244.1,545.2 C2246.4,545.6 2248.6,555.1 2250.9,554.9 C2252.1,554.8 2253.2,545.9 2254.4,544.5 C2257.5,543.0 2260.6,545.8 2263.7,546.8 C2264.5,547.8 2265.3,550.9 2266.0,550.3 C2268.4,549.7 2270.7,543.5 2273.0,543.3 C2274.6,543.1 2276.1,548.9 2277.7,549.1 C2279.2,549.3 2280.8,544.3 2282.3,544.5 C2284.7,544.7 2287.0,550.6 2289.3,550.3 C2291.7,550.0 2294.0,543.0 2296.3,542.8 C2297.5,542.6 2298.8,548.0 2300.0,549.1 C2301.9,550.2 2303.9,550.1 2305.8,549.1 C2307.8,548.1 2309.7,544.1 2311.6,543.3 C2314.8,542.5 2317.9,544.7 2321.0,544.5 C2322.9,544.3 2324.8,540.1 2326.8,542.1 C2329.1,544.2 2331.4,555.7 2333.8,556.1 C2335.3,556.5 2336.9,546.7 2338.4,544.5 C2344.3,542.2 2350.1,543.0 2355.9,543.3 C2357.1,543.6 2358.2,546.4 2359.4,546.1 C2361.3,545.8 2363.3,540.8 2365.2,541.4 C2366.8,542.1 2368.3,549.3 2369.9,549.8 C2371.4,550.3 2373.0,544.2 2374.5,544.5 C2376.5,544.7 2378.4,550.8 2380.4,551.4 C2382.3,552.1 2384.2,549.6 2386.2,548.0 C2390.1,546.3 2394.0,542.8 2397.8,542.1 C2400.6,541.4 2403.3,542.4 2406.0,544.0 C2408.3,545.6 2410.6,551.2 2413.0,551.4 C2414.9,551.7 2416.9,546.2 2418.8,545.6 C2421.1,545.0 2423.5,548.0 2425.8,548.0 C2427.3,548.0 2428.9,546.6 2430.4,545.6 C2435.1,544.7 2439.8,543.0 2444.4,542.6 C2446.8,542.2 2449.1,541.7 2451.4,543.3 C2452.6,544.8 2453.7,551.4 2454.9,551.4 C2456.8,551.4 2458.8,543.7 2460.7,543.3 C2463.1,542.9 2465.4,548.1 2467.7,549.1 C2470.8,550.1 2473.9,550.1 2477.0,549.1 C2479.4,548.1 2481.7,543.1 2484.0,543.3 C2486.3,543.5 2488.7,550.4 2491.0,550.3 C2493.3,550.2 2495.7,543.6 2498.0,542.8 C2500.3,542.1 2502.7,545.4 2505.0,546.1 C2506.9,546.8 2508.9,547.4 2510.8,546.8 C2512.4,546.2 2513.9,542.2 2515.5,542.6 C2519.7,543.0 2524.0,549.0 2528.3,549.1 C2529.8,549.2 2531.4,543.2 2532.9,543.3 C2536.8,543.4 2540.7,550.2 2544.6,549.8 C2546.9,549.4 2549.2,542.3 2551.6,541.0 C2553.1,539.6 2554.7,541.6 2556.2,542.1 C2560.0,542.7 2563.7,543.6 2567.4,544.0 C2571.4,544.4 2575.5,544.6 2579.5,544.5 C2581.9,544.3 2584.2,542.2 2586.5,543.3 C2588.1,544.4 2589.6,549.7 2591.2,550.7 C2592.3,551.8 2593.5,549.0 2594.7,549.1 C2595.8,549.2 2597.0,551.4 2598.2,551.4 C2598.8,551.4 2599.4,550.5 2600.0,549.1 C2601.6,547.7 2603.1,544.5 2604.7,543.3 C2607.8,542.1 2610.9,542.3 2614.0,542.1 C2617.1,542.0 2620.2,542.0 2623.3,542.6 C2624.5,543.2 2625.6,545.7 2626.8,545.6 C2628.3,545.5 2629.9,542.9 2631.4,542.1 C2633.8,541.3 2636.1,540.7 2638.4,541.0 C2639.2,541.2 2640.0,544.1 2640.8,543.8 C2641.9,543.4 2643.1,539.3 2644.3,539.1 C2648.1,538.9 2652.0,541.5 2655.9,542.8 C2657.1,544.2 2658.2,546.3 2659.4,546.8 C2662.9,547.3 2666.4,546.6 2669.9,545.6 C2671.4,544.6 2673.0,541.5 2674.5,541.0 C2679.2,540.5 2683.9,542.2 2688.5,542.8 C2691.2,543.4 2694.0,544.4 2696.7,544.5 C2698.6,544.5 2700.6,544.0 2702.5,543.3 C2704.4,542.6 2706.4,540.5 2708.3,540.5 C2709.9,540.5 2711.4,543.3 2713.0,543.3 C2714.1,543.3 2715.3,540.3 2716.5,540.5 C2718.0,540.7 2719.6,544.2 2721.1,544.5 C2723.8,544.7 2726.6,541.3 2729.3,542.1 C2730.8,542.9 2732.4,549.1 2733.9,549.1 C2737.4,549.1 2740.9,543.8 2744.4,542.1 C2749.9,540.5 2755.3,538.4 2760.7,539.8 C2762.7,541.2 2764.6,550.1 2766.6,550.3 C2768.5,550.5 2770.4,542.4 2772.4,541.0 C2775.5,539.5 2778.6,539.9 2781.7,542.1 C2785.6,544.4 2789.5,553.0 2793.3,553.8 C2796.4,554.6 2799.5,548.8 2802.7,546.8 C2804.2,544.7 2805.8,542.9 2807.3,542.1 C2812.0,541.4 2816.6,541.8 2821.3,542.6 C2822.5,543.4 2823.6,546.7 2824.8,546.8 C2825.9,546.9 2827.1,543.5 2828.3,543.3 C2829.8,543.1 2831.4,545.8 2832.9,545.6 C2835.3,545.4 2837.6,543.1 2839.9,542.1 C2844.2,541.1 2848.5,540.0 2852.7,539.8 C2854.3,539.6 2855.8,539.6 2857.4,541.0 C2860.1,542.3 2862.8,546.5 2865.5,547.5 C2868.3,548.5 2871.0,548.0 2873.7,546.8 C2875.3,545.6 2876.8,541.1 2878.4,540.5 C2882.6,539.9 2886.9,542.0 2891.2,543.3 C2892.7,544.6 2894.3,548.0 2895.8,548.0 C2896.6,547.9 2897.4,543.7 2898.2,542.8 C2901.3,541.9 2904.4,541.6 2907.5,542.8 C2911.4,544.1 2915.2,548.9 2919.1,549.8 C2921.5,550.7 2923.8,548.9 2926.1,548.0 C2927.7,547.0 2929.2,545.6 2930.8,544.5 C2934.7,543.3 2938.5,542.0 2942.4,541.4 C2944.0,540.8 2945.5,540.4 2947.1,541.0 C2950.2,541.5 2953.3,543.0 2956.4,544.5 C2958.7,545.9 2961.1,548.9 2963.4,549.1 C2965.7,549.3 2968.0,547.0 2970.4,545.6 C2975.8,544.2 2981.2,540.8 2986.7,541.0 C2989.0,541.2 2991.3,545.0 2993.7,546.8 C2996.0,548.6 2998.3,551.0 3000.7,551.4 C3002.2,551.9 3003.8,550.3 3005.3,549.1 C3007.6,548.0 3010.0,545.9 3012.3,544.9 C3019.3,543.9 3026.3,543.2 3033.3,543.3 C3034.8,543.4 3036.4,545.5 3037.9,545.6 C3043.0,545.7 3048.0,543.4 3053.1,544.0 C3058.1,544.6 3063.2,549.4 3068.2,549.1 C3072.9,548.8 3077.5,542.9 3082.2,542.1 C3084.5,541.3 3086.8,543.5 3089.2,544.5 C3096.5,545.4 3103.9,547.0 3111.3,547.5" fill="none" stroke="#5bc86b" stroke-width="4" stroke-linejoin="round" stroke-linecap="butt"/><circle cx="141.4" cy="913.6" r="3.7" fill="#fff" stroke="#5bc86b" stroke-width="4"/><circle cx="303.2" cy="570.5" r="3.7" fill="#fff" stroke="#5bc86b" stroke-width="4"/><circle cx="464.9" cy="547.2" r="3.7" fill="#fff" stroke="#5bc86b" stroke-width="4"/><circle cx="626.7" cy="544.5" r="3.7" fill="#fff" stroke="#5bc86b" stroke-width="4"/><circle cx="788.4" cy="544.9" r="3.7" fill="#fff" stroke="#5bc86b" stroke-width="4"/><circle cx="950.2" cy="545.0" r="3.7" fill="#fff" stroke="#5bc86b" stroke-width="4"/><circle cx="1112.0" cy="544.5" r="3.7" fill="#fff" stroke="#5bc86b" stroke-width="4"/><circle cx="1273.7" cy="542.1" r="3.7" fill="#fff" stroke="#5bc86b" stroke-width="4"/><circle cx="1435.5" cy="539.8" r="3.7" fill="#fff" stroke="#5bc86b" stroke-width="4"/><circle cx="1597.2" cy="549.1" r="3.7" fill="#fff" stroke="#5bc86b" stroke-width="4"/><circle cx="1759.0" cy="543.3" r="3.7" fill="#fff" stroke="#5bc86b" stroke-width="4"/><circle cx="1920.7" cy="539.9" r="3.7" fill="#fff" stroke="#5bc86b" stroke-width="4"/><circle cx="2082.5" cy="549.8" r="3.7" fill="#fff" stroke="#5bc86b" stroke-width="4"/><circle cx="2244.3" cy="545.3" r="3.7" fill="#fff" stroke="#5bc86b" stroke-width="4"/><circle cx="2406.0" cy="544.0" r="3.7" fill="#fff" stroke="#5bc86b" stroke-width="4"/><circle cx="2567.8" cy="544.0" r="3.7" fill="#fff" stroke="#5bc86b" stroke-width="4"/><circle cx="2729.5" cy="542.5" r="3.7" fill="#fff" stroke="#5bc86b" stroke-width="4"/><circle cx="2891.3" cy="543.4" r="3.7" fill="#fff" stroke="#5bc86b" stroke-width="4"/><circle cx="3053.1" cy="544.0" r="3.7" fill="#fff" stroke="#5bc86b" stroke-width="4"/><path d="M141.4,1604.1 L144.7,1590.9 L148.0,1577.7 L151.3,1577.7 L154.6,1538.1 L157.9,1498.5 L161.2,1472.2 L164.5,1445.8 L167.8,1393.0 L171.1,1366.6 L174.4,1340.2 L177.7,1340.2 L181.0,1340.2 L184.3,1340.2 L187.6,1340.2 L190.9,1340.2 L194.2,1340.2 L197.5,1340.2 L200.8,1340.2 L204.1,1340.2 L207.4,1340.2 L210.7,1340.2 L214.0,1340.2 L217.3,1340.2 L220.6,1340.2 L223.9,1340.2 L227.2,1340.2 L230.5,1340.2 L233.8,1366.6 L237.1,1340.2 L240.4,1340.2 L243.7,1340.2 L247.0,1340.2 L250.3,1340.2 L253.6,1340.2 L256.9,1340.2 L260.2,1340.2 L263.5,1340.2 L266.8,1340.2 L270.1,1340.2 L273.4,1340.2 L276.7,1340.2 L280.1,1340.2 L283.4,1340.2 L286.7,1340.2 L290.0,1340.2 L293.3,1313.8 L296.6,1340.2 L299.9,1340.2 L303.2,1366.6 L306.5,1366.6 L309.8,1340.2 L313.1,1366.6 L316.4,1340.2 L319.7,1366.6 L323.0,1340.2 L326.3,1340.2 L329.6,1340.2 L332.9,1366.6 L336.2,1340.2 L339.5,1340.2 L342.8,1340.2 L346.1,1340.2 L349.4,1340.2 L352.7,1340.2 L356.0,1340.2 L359.3,1340.2 L362.6,1340.2 L365.9,1340.2 L369.2,1340.2 L372.5,1340.2 L375.8,1340.2 L379.1,1340.2 L382.4,1366.6 L385.7,1340.2 L389.0,1366.6 L392.3,1340.2 L395.6,1340.2 L398.9,1366.6 L402.2,1366.6 L405.5,1366.6 L408.8,1366.6 L412.1,1393.0 L415.4,1393.0 L418.7,1393.0 L422.0,1393.0 L425.3,1393.0 L428.6,1393.0 L431.9,1393.0 L435.2,1393.0 L438.5,1393.0 L441.8,1393.0 L445.1,1393.0 L448.4,1393.0 L451.7,1393.0 L455.0,1393.0 L458.3,1393.0 L461.6,1393.0 L464.9,1393.0 L468.2,1393.0 L471.5,1393.0 L474.8,1366.6 L478.1,1393.0 L481.4,1393.0 L484.7,1393.0 L488.0,1393.0 L491.3,1393.0 L494.6,1393.0 L497.9,1393.0 L501.2,1393.0 L504.5,1393.0 L507.8,1393.0 L511.1,1393.0 L514.4,1393.0 L517.7,1393.0 L521.0,1393.0 L524.3,1393.0 L527.6,1393.0 L530.9,1393.0 L534.2,1366.6 L537.5,1393.0 L540.8,1393.0 L544.1,1393.0 L547.4,1393.0 L550.7,1393.0 L554.1,1393.0 L557.4,1393.0 L560.7,1393.0 L564.0,1393.0 L567.3,1393.0 L570.6,1393.0 L573.9,1393.0 L577.2,1393.0 L580.5,1393.0 L583.8,1393.0 L587.1,1393.0 L590.4,1393.0 L593.7,1393.0 L597.0,1393.0 L600.3,1366.6 L603.6,1393.0 L606.9,1393.0 L610.2,1393.0 L613.5,1393.0 L616.8,1393.0 L620.1,1393.0 L623.4,1393.0 L626.7,1393.0 L630.0,1393.0 L633.3,1393.0 L636.6,1393.0 L639.9,1393.0 L643.2,1393.0 L646.5,1393.0 L649.8,1393.0 L653.1,1393.0 L656.4,1393.0 L659.7,1393.0 L663.0,1393.0 L666.3,1393.0 L669.6,1393.0 L672.9,1393.0 L676.2,1393.0 L679.5,1393.0 L682.8,1393.0 L686.1,1393.0 L689.4,1393.0 L692.7,1393.0 L696.0,1393.0 L699.3,1393.0 L702.6,1393.0 L705.9,1393.0 L709.2,1393.0 L712.5,1393.0 L715.8,1393.0 L719.1,1393.0 L722.4,1393.0 L725.7,1393.0 L729.0,1393.0 L732.3,1393.0 L735.6,1393.0 L738.9,1393.0 L742.2,1393.0 L745.5,1393.0 L748.8,1393.0 L752.1,1393.0 L755.4,1393.0 L758.7,1393.0 L762.0,1393.0 L765.3,1393.0 L768.6,1393.0 L771.9,1393.0 L775.2,1393.0 L778.5,1393.0 L781.8,1393.0 L785.1,1393.0 L788.4,1393.0 L791.7,1393.0 L795.0,1393.0 L798.3,1393.0 L801.6,1393.0 L804.9,1393.0 L808.2,1393.0 L811.5,1393.0 L814.8,1393.0 L818.1,1366.6 L821.4,1393.0 L824.7,1393.0 L828.0,1393.0 L831.4,1393.0 L834.7,1393.0 L838.0,1393.0 L841.3,1393.0 L844.6,1393.0 L847.9,1393.0 L851.2,1393.0 L854.5,1393.0 L857.8,1393.0 L861.1,1393.0 L864.4,1393.0 L867.7,1393.0 L871.0,1393.0 L874.3,1393.0 L877.6,1393.0 L880.9,1393.0 L884.2,1393.0 L887.5,1393.0 L890.8,1393.0 L894.1,1393.0 L897.4,1393.0 L900.7,1393.0 L904.0,1393.0 L907.3,1393.0 L910.6,1393.0 L913.9,1393.0 L917.2,1393.0 L920.5,1393.0 L923.8,1393.0 L927.1,1393.0 L930.4,1393.0 L933.7,1393.0 L937.0,1393.0 L940.3,1393.0 L943.6,1393.0 L946.9,1393.0 L950.2,1393.0 L953.5,1393.0 L956.8,1393.0 L960.1,1393.0 L963.4,1366.6 L966.7,1393.0 L970.0,1393.0 L973.3,1393.0 L976.6,1393.0 L979.9,1393.0 L983.2,1393.0 L986.5,1393.0 L989.8,1393.0 L993.1,1393.0 L996.4,1393.0 L999.7,1393.0 L1003.0,1393.0 L1006.3,1393.0 L1009.6,1393.0 L1012.9,1393.0 L1016.2,1393.0 L1019.5,1393.0 L1022.8,1393.0 L1026.1,1393.0 L1029.4,1393.0 L1032.7,1393.0 L1036.0,1393.0 L1039.3,1393.0 L1042.6,1393.0 L1045.9,1393.0 L1049.2,1393.0 L1052.5,1393.0 L1055.8,1393.0 L1059.1,1393.0 L1062.4,1393.0 L1065.7,1393.0 L1069.0,1393.0 L1072.3,1393.0 L1075.6,1393.0 L1078.9,1393.0 L1082.2,1393.0 L1085.5,1393.0 L1088.8,1393.0 L1092.1,1393.0 L1095.4,1393.0 L1098.7,1393.0 L1102.0,1393.0 L1105.4,1393.0 L1108.7,1393.0 L1112.0,1393.0 L1115.3,1393.0 L1118.6,1393.0 L1121.9,1393.0 L1125.2,1393.0 L1128.5,1393.0 L1131.8,1393.0 L1135.1,1366.6 L1138.4,1366.6 L1141.7,1366.6 L1145.0,1366.6 L1148.3,1366.6 L1151.6,1393.0 L1154.9,1393.0 L1158.2,1393.0 L1161.5,1393.0 L1164.8,1393.0 L1168.1,1393.0 L1171.4,1393.0 L1174.7,1393.0 L1178.0,1393.0 L1181.3,1393.0 L1184.6,1393.0 L1187.9,1393.0 L1191.2,1393.0 L1194.5,1393.0 L1197.8,1393.0 L1201.1,1393.0 L1204.4,1393.0 L1207.7,1393.0 L1211.0,1393.0 L1214.3,1393.0 L1217.6,1393.0 L1220.9,1393.0 L1224.2,1393.0 L1227.5,1393.0 L1230.8,1393.0 L1234.1,1393.0 L1237.4,1393.0 L1240.7,1393.0 L1244.0,1393.0 L1247.3,1393.0 L1250.6,1393.0 L1253.9,1393.0 L1257.2,1393.0 L1260.5,1393.0 L1263.8,1393.0 L1267.1,1393.0 L1270.4,1393.0 L1273.7,1393.0 L1277.0,1393.0 L1280.3,1393.0 L1283.6,1393.0 L1286.9,1393.0 L1290.2,1393.0 L1293.5,1393.0 L1296.8,1393.0 L1300.1,1393.0 L1303.4,1393.0 L1306.7,1393.0 L1310.0,1393.0 L1313.3,1393.0 L1316.6,1393.0 L1319.9,1393.0 L1323.2,1393.0 L1326.5,1393.0 L1329.8,1393.0 L1333.1,1393.0 L1336.4,1393.0 L1339.7,1393.0 L1343.0,1393.0 L1346.3,1393.0 L1349.6,1393.0 L1352.9,1393.0 L1356.2,1393.0 L1359.5,1393.0 L1362.8,1393.0 L1366.1,1393.0 L1369.4,1393.0 L1372.7,1393.0 L1376.0,1393.0 L1379.4,1393.0 L1382.7,1393.0 L1386.0,1393.0 L1389.3,1393.0 L1392.6,1393.0 L1395.9,1393.0 L1399.2,1393.0 L1402.5,1393.0 L1405.8,1393.0 L1409.1,1393.0 L1412.4,1393.0 L1415.7,1393.0 L1419.0,1393.0 L1422.3,1393.0 L1425.6,1393.0 L1428.9,1393.0 L1432.2,1393.0 L1435.5,1393.0 L1438.8,1393.0 L1442.1,1393.0 L1445.4,1393.0 L1448.7,1393.0 L1452.0,1393.0 L1455.3,1393.0 L1458.6,1393.0 L1461.9,1393.0 L1465.2,1393.0 L1468.5,1393.0 L1471.8,1393.0 L1475.1,1393.0 L1478.4,1366.6 L1481.7,1393.0 L1485.0,1393.0 L1488.3,1393.0 L1491.6,1393.0 L1494.9,1393.0 L1498.2,1393.0 L1501.5,1393.0 L1504.8,1393.0 L1508.1,1393.0 L1511.4,1393.0 L1514.7,1393.0 L1518.0,1393.0 L1521.3,1393.0 L1524.6,1393.0 L1527.9,1393.0 L1531.2,1393.0 L1534.5,1393.0 L1537.8,1393.0 L1541.1,1393.0 L1544.4,1393.0 L1547.7,1393.0 L1551.0,1393.0 L1554.3,1393.0 L1557.6,1393.0 L1560.9,1393.0 L1564.2,1393.0 L1567.5,1393.0 L1570.8,1393.0 L1574.1,1393.0 L1577.4,1393.0 L1580.7,1393.0 L1584.0,1393.0 L1587.3,1393.0 L1590.6,1393.0 L1593.9,1393.0 L1597.2,1393.0 L1600.5,1393.0 L1603.8,1393.0 L1607.1,1393.0 L1610.4,1393.0 L1613.7,1393.0 L1617.0,1393.0 L1620.3,1393.0 L1623.6,1393.0 L1626.9,1393.0 L1630.2,1393.0 L1633.5,1393.0 L1636.8,1393.0 L1640.1,1393.0 L1643.4,1393.0 L1646.7,1366.6 L1650.0,1393.0 L1653.3,1366.6 L1656.7,1393.0 L1660.0,1393.0 L1663.3,1393.0 L1666.6,1393.0 L1669.9,1393.0 L1673.2,1393.0 L1676.5,1393.0 L1679.8,1393.0 L1683.1,1393.0 L1686.4,1393.0 L1689.7,1393.0 L1693.0,1393.0 L1696.3,1393.0 L1699.6,1393.0 L1702.9,1393.0 L1706.2,1393.0 L1709.5,1393.0 L1712.8,1393.0 L1716.1,1393.0 L1719.4,1393.0 L1722.7,1393.0 L1726.0,1393.0 L1729.3,1393.0 L1732.6,1393.0 L1735.9,1393.0 L1739.2,1393.0 L1742.5,1393.0 L1745.8,1393.0 L1749.1,1393.0 L1752.4,1393.0 L1755.7,1393.0 L1759.0,1393.0 L1762.3,1393.0 L1765.6,1393.0 L1768.9,1393.0 L1772.2,1393.0 L1775.5,1393.0 L1778.8,1393.0 L1782.1,1393.0 L1785.4,1393.0 L1788.7,1393.0 L1792.0,1393.0 L1795.3,1393.0 L1798.6,1393.0 L1801.9,1393.0 L1805.2,1393.0 L1808.5,1393.0 L1811.8,1393.0 L1815.1,1393.0 L1818.4,1393.0 L1821.7,1393.0 L1825.0,1393.0 L1828.3,1393.0 L1831.6,1393.0 L1834.9,1393.0 L1838.2,1393.0 L1841.5,1393.0 L1844.8,1393.0 L1848.1,1393.0 L1851.4,1393.0 L1854.7,1393.0 L1858.0,1393.0 L1861.3,1393.0 L1864.6,1393.0 L1867.9,1393.0 L1871.2,1393.0 L1874.5,1393.0 L1877.8,1393.0 L1881.1,1393.0 L1884.4,1393.0 L1887.7,1393.0 L1891.0,1393.0 L1894.3,1393.0 L1897.6,1393.0 L1900.9,1393.0 L1904.2,1393.0 L1907.5,1393.0 L1910.8,1393.0 L1914.1,1393.0 L1917.4,1393.0 L1920.7,1393.0 L1924.0,1393.0 L1927.3,1393.0 L1930.7,1393.0 L1934.0,1393.0 L1937.3,1393.0 L1940.6,1393.0 L1943.9,1393.0 L1947.2,1393.0 L1950.5,1393.0 L1953.8,1393.0 L1957.1,1393.0 L1960.4,1393.0 L1963.7,1393.0 L1967.0,1393.0 L1970.3,1393.0 L1973.6,1393.0 L1976.9,1393.0 L1980.2,1393.0 L1983.5,1393.0 L1986.8,1393.0 L1990.1,1393.0 L1993.4,1393.0 L1996.7,1393.0 L2000.0,1393.0 L2003.3,1393.0 L2006.6,1393.0 L2009.9,1393.0 L2013.2,1393.0 L2016.5,1393.0 L2019.8,1393.0 L2023.1,1393.0 L2026.4,1393.0 L2029.7,1393.0 L2033.0,1393.0 L2036.3,1393.0 L2039.6,1393.0 L2042.9,1393.0 L2046.2,1393.0 L2049.5,1393.0 L2052.8,1393.0 L2056.1,1393.0 L2059.4,1393.0 L2062.7,1393.0 L2066.0,1393.0 L2069.3,1393.0 L2072.6,1393.0 L2075.9,1393.0 L2079.2,1393.0 L2082.5,1393.0 L2085.8,1393.0 L2089.1,1393.0 L2092.4,1393.0 L2095.7,1393.0 L2099.0,1393.0 L2102.3,1393.0 L2105.6,1393.0 L2108.9,1393.0 L2112.2,1393.0 L2115.5,1393.0 L2118.8,1393.0 L2122.1,1393.0 L2125.4,1393.0 L2128.7,1393.0 L2132.0,1393.0 L2135.3,1393.0 L2138.6,1393.0 L2141.9,1393.0 L2145.2,1393.0 L2148.5,1393.0 L2151.8,1393.0 L2155.1,1393.0 L2158.4,1393.0 L2161.7,1393.0 L2165.0,1393.0 L2168.3,1393.0 L2171.6,1393.0 L2174.9,1393.0 L2178.2,1393.0 L2181.5,1393.0 L2184.8,1393.0 L2188.1,1393.0 L2191.4,1393.0 L2194.7,1393.0 L2198.0,1393.0 L2201.3,1393.0 L2204.7,1393.0 L2208.0,1393.0 L2211.3,1393.0 L2214.6,1393.0 L2217.9,1393.0 L2221.2,1393.0 L2224.5,1393.0 L2227.8,1393.0 L2231.1,1393.0 L2234.4,1393.0 L2237.7,1393.0 L2241.0,1393.0 L2244.3,1393.0 L2247.6,1393.0 L2250.9,1393.0 L2254.2,1393.0 L2257.5,1393.0 L2260.8,1393.0 L2264.1,1393.0 L2267.4,1393.0 L2270.7,1393.0 L2274.0,1393.0 L2277.3,1393.0 L2280.6,1393.0 L2283.9,1393.0 L2287.2,1393.0 L2290.5,1393.0 L2293.8,1393.0 L2297.1,1393.0 L2300.4,1393.0 L2303.7,1393.0 L2307.0,1393.0 L2310.3,1393.0 L2313.6,1393.0 L2316.9,1393.0 L2320.2,1393.0 L2323.5,1393.0 L2326.8,1393.0 L2330.1,1393.0 L2333.4,1393.0 L2336.7,1393.0 L2340.0,1393.0 L2343.3,1393.0 L2346.6,1393.0 L2349.9,1393.0 L2353.2,1393.0 L2356.5,1393.0 L2359.8,1393.0 L2363.1,1393.0 L2366.4,1393.0 L2369.7,1393.0 L2373.0,1393.0 L2376.3,1393.0 L2379.6,1393.0 L2382.9,1393.0 L2386.2,1393.0 L2389.5,1393.0 L2392.8,1393.0 L2396.1,1393.0 L2399.4,1393.0 L2402.7,1393.0 L2406.0,1393.0 L2409.3,1393.0 L2412.6,1393.0 L2415.9,1393.0 L2419.2,1393.0 L2422.5,1393.0 L2425.8,1393.0 L2429.1,1393.0 L2432.4,1393.0 L2435.7,1393.0 L2439.0,1393.0 L2442.3,1393.0 L2445.6,1393.0 L2448.9,1393.0 L2452.2,1393.0 L2455.5,1393.0 L2458.8,1393.0 L2462.1,1393.0 L2465.4,1393.0 L2468.7,1393.0 L2472.0,1393.0 L2475.3,1393.0 L2478.6,1393.0 L2482.0,1393.0 L2485.3,1393.0 L2488.6,1393.0 L2491.9,1393.0 L2495.2,1393.0 L2498.5,1393.0 L2501.8,1393.0 L2505.1,1393.0 L2508.4,1393.0 L2511.7,1393.0 L2515.0,1393.0 L2518.3,1393.0 L2521.6,1393.0 L2524.9,1393.0 L2528.2,1393.0 L2531.5,1393.0 L2534.8,1393.0 L2538.1,1393.0 L2541.4,1393.0 L2544.7,1393.0 L2548.0,1393.0 L2551.3,1393.0 L2554.6,1393.0 L2557.9,1393.0 L2561.2,1393.0 L2564.5,1393.0 L2567.8,1393.0 L2571.1,1393.0 L2574.4,1393.0 L2577.7,1393.0 L2581.0,1393.0 L2584.3,1393.0 L2587.6,1393.0 L2590.9,1393.0 L2594.2,1393.0 L2597.5,1393.0 L2600.8,1393.0 L2604.1,1393.0 L2607.4,1393.0 L2610.7,1393.0 L2614.0,1393.0 L2617.3,1393.0 L2620.6,1393.0 L2623.9,1393.0 L2627.2,1393.0 L2630.5,1393.0 L2633.8,1393.0 L2637.1,1393.0 L2640.4,1393.0 L2643.7,1393.0 L2647.0,1393.0 L2650.3,1393.0 L2653.6,1393.0 L2656.9,1393.0 L2660.2,1393.0 L2663.5,1393.0 L2666.8,1393.0 L2670.1,1393.0 L2673.4,1393.0 L2676.7,1393.0 L2680.0,1393.0 L2683.3,1393.0 L2686.6,1393.0 L2689.9,1393.0 L2693.2,1393.0 L2696.5,1393.0 L2699.8,1393.0 L2703.1,1393.0 L2706.4,1393.0 L2709.7,1393.0 L2713.0,1393.0 L2716.3,1393.0 L2719.6,1393.0 L2722.9,1393.0 L2726.2,1393.0 L2729.5,1393.0 L2732.8,1393.0 L2736.1,1393.0 L2739.4,1393.0 L2742.7,1393.0 L2746.0,1393.0 L2749.3,1393.0 L2752.6,1393.0 L2756.0,1393.0 L2759.3,1393.0 L2762.6,1393.0 L2765.9,1393.0 L2769.2,1393.0 L2772.5,1393.0 L2775.8,1393.0 L2779.1,1393.0 L2782.4,1393.0 L2785.7,1393.0 L2789.0,1393.0 L2792.3,1393.0 L2795.6,1393.0 L2798.9,1393.0 L2802.2,1393.0 L2805.5,1393.0 L2808.8,1393.0 L2812.1,1393.0 L2815.4,1393.0 L2818.7,1393.0 L2822.0,1393.0 L2825.3,1393.0 L2828.6,1393.0 L2831.9,1393.0 L2835.2,1393.0 L2838.5,1393.0 L2841.8,1393.0 L2845.1,1393.0 L2848.4,1393.0 L2851.7,1393.0 L2855.0,1393.0 L2858.3,1393.0 L2861.6,1393.0 L2864.9,1393.0 L2868.2,1393.0 L2871.5,1393.0 L2874.8,1393.0 L2878.1,1393.0 L2881.4,1393.0 L2884.7,1393.0 L2888.0,1393.0 L2891.3,1393.0 L2894.6,1393.0 L2897.9,1393.0 L2901.2,1393.0 L2904.5,1393.0 L2907.8,1393.0 L2911.1,1393.0 L2914.4,1393.0 L2917.7,1393.0 L2921.0,1393.0 L2924.3,1393.0 L2927.6,1393.0 L2930.9,1393.0 L2934.2,1393.0 L2937.5,1393.0 L2940.8,1393.0 L2944.1,1393.0 L2947.4,1393.0 L2950.7,1393.0 L2954.0,1393.0 L2957.3,1393.0 L2960.6,1393.0 L2963.9,1393.0 L2967.2,1393.0 L2970.5,1393.0 L2973.8,1393.0 L2977.1,1393.0 L2980.4,1393.0 L2983.7,1393.0 L2987.0,1393.0 L2990.3,1393.0 L2993.6,1393.0 L2996.9,1393.0 L3000.2,1393.0 L3003.5,1393.0 L3006.8,1393.0 L3010.1,1393.0 L3013.4,1393.0 L3016.7,1393.0 L3020.0,1393.0 L3023.3,1393.0 L3026.6,1393.0 L3030.0,1393.0 L3033.3,1393.0 L3036.6,1393.0 L3039.9,1393.0 L3043.2,1393.0 L3046.5,1393.0 L3049.8,1393.0 L3053.1,1393.0 L3056.4,1393.0 L3059.7,1393.0 L3063.0,1393.0 L3066.3,1393.0 L3069.6,1393.0 L3072.9,1393.0 L3076.2,1393.0 L3079.5,1393.0 L3082.8,1393.0 L3086.1,1393.0 L3089.4,1393.0 L3092.7,1393.0 L3096.0,1393.0 L3099.3,1393.0 L3102.6,1393.0 L3105.9,1393.0 L3109.2,1393.0 L3112.5,1393.0" fill="none" stroke="#f7c96c" stroke-width="4" stroke-linejoin="round" stroke-linecap="butt"/><circle cx="141.4" cy="1604.1" r="3.7" fill="#fff" stroke="#f7c96c" stroke-width="4"/><circle cx="303.2" cy="1366.6" r="3.7" fill="#fff" stroke="#f7c96c" stroke-width="4"/><circle cx="464.9" cy="1393.0" r="3.7" fill="#fff" stroke="#f7c96c" stroke-width="4"/><circle cx="626.7" cy="1393.0" r="3.7" fill="#fff" stroke="#f7c96c" stroke-width="4"/><circle cx="788.4" cy="1393.0" r="3.7" fill="#fff" stroke="#f7c96c" stroke-width="4"/><circle cx="950.2" cy="1393.0" r="3.7" fill="#fff" stroke="#f7c96c" stroke-width="4"/><circle cx="1112.0" cy="1393.0" r="3.7" fill="#fff" stroke="#f7c96c" stroke-width="4"/><circle cx="1273.7" cy="1393.0" r="3.7" fill="#fff" stroke="#f7c96c" stroke-width="4"/><circle cx="1435.5" cy="1393.0" r="3.7" fill="#fff" stroke="#f7c96c" stroke-width="4"/><circle cx="1597.2" cy="1393.0" r="3.7" fill="#fff" stroke="#f7c96c" stroke-width="4"/><circle cx="1759.0" cy="1393.0" r="3.7" fill="#fff" stroke="#f7c96c" stroke-width="4"/><circle cx="1920.7" cy="1393.0" r="3.7" fill="#fff" stroke="#f7c96c" stroke-width="4"/><circle cx="2082.5" cy="1393.0" r="3.7" fill="#fff" stroke="#f7c96c" stroke-width="4"/><circle cx="2244.3" cy="1393.0" r="3.7" fill="#fff" stroke="#f7c96c" stroke-width="4"/><circle cx="2406.0" cy="1393.0" r="3.7" fill="#fff" stroke="#f7c96c" stroke-width="4"/><circle cx="2567.8" cy="1393.0" r="3.7" fill="#fff" stroke="#f7c96c" stroke-width="4"/><circle cx="2729.5" cy="1393.0" r="3.7" fill="#fff" stroke="#f7c96c" stroke-width="4"/><circle cx="2891.3" cy="1393.0" r="3.7" fill="#fff" stroke="#f7c96c" stroke-width="4"/><circle cx="3053.1" cy="1393.0" r="3.7" fill="#fff" stroke="#f7c96c" stroke-width="4"/><path d="M141.4,1630.5 L144.7,1630.5 L148.0,1630.5 L151.3,1630.5 L154.6,1604.1 L157.9,1604.1 L161.2,1577.7 L164.5,1577.7 L167.8,1551.3 L171.1,1551.3 L174.4,1524.9 L177.7,1524.9 L181.0,1524.9 L184.3,1524.9 L187.6,1524.9 L190.9,1524.9 L194.2,1524.9 L197.5,1524.9 L200.8,1524.9 L204.1,1524.9 L207.4,1524.9 L210.7,1524.9 L214.0,1524.9 L217.3,1524.9 L220.6,1524.9 L223.9,1524.9 L227.2,1524.9 L230.5,1524.9 L233.8,1524.9 L237.1,1524.9 L240.4,1524.9 L243.7,1524.9 L247.0,1524.9 L250.3,1524.9 L253.6,1524.9 L256.9,1524.9 L260.2,1524.9 L263.5,1524.9 L266.8,1524.9 L270.1,1524.9 L273.4,1524.9 L276.7,1524.9 L280.1,1524.9 L283.4,1524.9 L286.7,1524.9 L290.0,1524.9 L293.3,1524.9 L296.6,1524.9 L299.9,1524.9 L303.2,1524.9 L306.5,1524.9 L309.8,1524.9 L313.1,1524.9 L316.4,1524.9 L319.7,1524.9 L323.0,1524.9 L326.3,1524.9 L329.6,1524.9 L332.9,1524.9 L336.2,1524.9 L339.5,1524.9 L342.8,1524.9 L346.1,1524.9 L349.4,1524.9 L352.7,1524.9 L356.0,1524.9 L359.3,1524.9 L362.6,1524.9 L365.9,1524.9 L369.2,1524.9 L372.5,1524.9 L375.8,1524.9 L379.1,1524.9 L382.4,1524.9 L385.7,1524.9 L389.0,1524.9 L392.3,1524.9 L395.6,1524.9 L398.9,1524.9 L402.2,1524.9 L405.5,1524.9 L408.8,1551.3 L412.1,1551.3 L415.4,1551.3 L418.7,1551.3 L422.0,1524.9 L425.3,1551.3 L428.6,1551.3 L431.9,1551.3 L435.2,1551.3 L438.5,1551.3 L441.8,1551.3 L445.1,1551.3 L448.4,1524.9 L451.7,1551.3 L455.0,1551.3 L458.3,1551.3 L461.6,1551.3 L464.9,1524.9 L468.2,1551.3 L471.5,1551.3 L474.8,1524.9 L478.1,1551.3 L481.4,1551.3 L484.7,1524.9 L488.0,1551.3 L491.3,1551.3 L494.6,1551.3 L497.9,1524.9 L501.2,1524.9 L504.5,1551.3 L507.8,1551.3 L511.1,1551.3 L514.4,1524.9 L517.7,1551.3 L521.0,1551.3 L524.3,1524.9 L527.6,1524.9 L530.9,1524.9 L534.2,1524.9 L537.5,1524.9 L540.8,1551.3 L544.1,1551.3 L547.4,1524.9 L550.7,1551.3 L554.1,1524.9 L557.4,1551.3 L560.7,1551.3 L564.0,1524.9 L567.3,1524.9 L570.6,1524.9 L573.9,1551.3 L577.2,1524.9 L580.5,1551.3 L583.8,1524.9 L587.1,1551.3 L590.4,1524.9 L593.7,1551.3 L597.0,1524.9 L600.3,1551.3 L603.6,1551.3 L606.9,1551.3 L610.2,1551.3 L613.5,1551.3 L616.8,1551.3 L620.1,1524.9 L623.4,1551.3 L626.7,1551.3 L630.0,1551.3 L633.3,1524.9 L636.6,1551.3 L639.9,1551.3 L643.2,1551.3 L646.5,1551.3 L649.8,1551.3 L653.1,1551.3 L656.4,1524.9 L659.7,1551.3 L663.0,1551.3 L666.3,1524.9 L669.6,1551.3 L672.9,1524.9 L676.2,1551.3 L679.5,1551.3 L682.8,1551.3 L686.1,1551.3 L689.4,1551.3 L692.7,1551.3 L696.0,1551.3 L699.3,1551.3 L702.6,1551.3 L705.9,1524.9 L709.2,1551.3 L712.5,1551.3 L715.8,1524.9 L719.1,1551.3 L722.4,1551.3 L725.7,1524.9 L729.0,1524.9 L732.3,1551.3 L735.6,1551.3 L738.9,1524.9 L742.2,1551.3 L745.5,1551.3 L748.8,1551.3 L752.1,1524.9 L755.4,1551.3 L758.7,1551.3 L762.0,1551.3 L765.3,1551.3 L768.6,1551.3 L771.9,1524.9 L775.2,1551.3 L778.5,1551.3 L781.8,1551.3 L785.1,1551.3 L788.4,1524.9 L791.7,1551.3 L795.0,1551.3 L798.3,1524.9 L801.6,1551.3 L804.9,1551.3 L808.2,1551.3 L811.5,1524.9 L814.8,1551.3 L818.1,1551.3 L821.4,1524.9 L824.7,1551.3 L828.0,1551.3 L831.4,1524.9 L834.7,1524.9 L838.0,1524.9 L841.3,1551.3 L844.6,1551.3 L847.9,1524.9 L851.2,1551.3 L854.5,1524.9 L857.8,1551.3 L861.1,1551.3 L864.4,1551.3 L867.7,1551.3 L871.0,1524.9 L874.3,1524.9 L877.6,1551.3 L880.9,1551.3 L884.2,1551.3 L887.5,1524.9 L890.8,1524.9 L894.1,1524.9 L897.4,1524.9 L900.7,1524.9 L904.0,1524.9 L907.3,1524.9 L910.6,1551.3 L913.9,1551.3 L917.2,1524.9 L920.5,1551.3 L923.8,1551.3 L927.1,1524.9 L930.4,1524.9 L933.7,1524.9 L937.0,1524.9 L940.3,1524.9 L943.6,1524.9 L946.9,1551.3 L950.2,1524.9 L953.5,1551.3 L956.8,1551.3 L960.1,1524.9 L963.4,1524.9 L966.7,1524.9 L970.0,1524.9 L973.3,1551.3 L976.6,1551.3 L979.9,1551.3 L983.2,1524.9 L986.5,1551.3 L989.8,1551.3 L993.1,1551.3 L996.4,1524.9 L999.7,1551.3 L1003.0,1551.3 L1006.3,1524.9 L1009.6,1551.3 L1012.9,1524.9 L1016.2,1551.3 L1019.5,1551.3 L1022.8,1524.9 L1026.1,1551.3 L1029.4,1551.3 L1032.7,1524.9 L1036.0,1551.3 L1039.3,1551.3 L1042.6,1551.3 L1045.9,1551.3 L1049.2,1551.3 L1052.5,1551.3 L1055.8,1551.3 L1059.1,1551.3 L1062.4,1551.3 L1065.7,1551.3 L1069.0,1551.3 L1072.3,1551.3 L1075.6,1551.3 L1078.9,1551.3 L1082.2,1551.3 L1085.5,1551.3 L1088.8,1524.9 L1092.1,1551.3 L1095.4,1551.3 L1098.7,1524.9 L1102.0,1551.3 L1105.4,1551.3 L1108.7,1551.3 L1112.0,1524.9 L1115.3,1551.3 L1118.6,1551.3 L1121.9,1524.9 L1125.2,1551.3 L1128.5,1551.3 L1131.8,1524.9 L1135.1,1524.9 L1138.4,1524.9 L1141.7,1524.9 L1145.0,1524.9 L1148.3,1524.9 L1151.6,1551.3 L1154.9,1551.3 L1158.2,1524.9 L1161.5,1551.3 L1164.8,1551.3 L1168.1,1524.9 L1171.4,1551.3 L1174.7,1551.3 L1178.0,1551.3 L1181.3,1551.3 L1184.6,1551.3 L1187.9,1551.3 L1191.2,1524.9 L1194.5,1551.3 L1197.8,1524.9 L1201.1,1551.3 L1204.4,1551.3 L1207.7,1551.3 L1211.0,1551.3 L1214.3,1551.3 L1217.6,1551.3 L1220.9,1551.3 L1224.2,1551.3 L1227.5,1551.3 L1230.8,1551.3 L1234.1,1524.9 L1237.4,1551.3 L1240.7,1551.3 L1244.0,1551.3 L1247.3,1551.3 L1250.6,1551.3 L1253.9,1551.3 L1257.2,1551.3 L1260.5,1551.3 L1263.8,1551.3 L1267.1,1551.3 L1270.4,1551.3 L1273.7,1524.9 L1277.0,1551.3 L1280.3,1551.3 L1283.6,1551.3 L1286.9,1551.3 L1290.2,1551.3 L1293.5,1524.9 L1296.8,1551.3 L1300.1,1524.9 L1303.4,1551.3 L1306.7,1524.9 L1310.0,1551.3 L1313.3,1551.3 L1316.6,1551.3 L1319.9,1524.9 L1323.2,1551.3 L1326.5,1551.3 L1329.8,1551.3 L1333.1,1524.9 L1336.4,1551.3 L1339.7,1551.3 L1343.0,1551.3 L1346.3,1551.3 L1349.6,1551.3 L1352.9,1551.3 L1356.2,1551.3 L1359.5,1524.9 L1362.8,1524.9 L1366.1,1524.9 L1369.4,1551.3 L1372.7,1551.3 L1376.0,1551.3 L1379.4,1551.3 L1382.7,1551.3 L1386.0,1524.9 L1389.3,1551.3 L1392.6,1551.3 L1395.9,1551.3 L1399.2,1551.3 L1402.5,1551.3 L1405.8,1551.3 L1409.1,1551.3 L1412.4,1551.3 L1415.7,1551.3 L1419.0,1551.3 L1422.3,1551.3 L1425.6,1551.3 L1428.9,1551.3 L1432.2,1551.3 L1435.5,1551.3 L1438.8,1551.3 L1442.1,1551.3 L1445.4,1551.3 L1448.7,1551.3 L1452.0,1524.9 L1455.3,1551.3 L1458.6,1551.3 L1461.9,1551.3 L1465.2,1551.3 L1468.5,1551.3 L1471.8,1524.9 L1475.1,1551.3 L1478.4,1524.9 L1481.7,1551.3 L1485.0,1551.3 L1488.3,1524.9 L1491.6,1524.9 L1494.9,1524.9 L1498.2,1551.3 L1501.5,1551.3 L1504.8,1551.3 L1508.1,1524.9 L1511.4,1551.3 L1514.7,1551.3 L1518.0,1524.9 L1521.3,1551.3 L1524.6,1551.3 L1527.9,1524.9 L1531.2,1524.9 L1534.5,1524.9 L1537.8,1551.3 L1541.1,1551.3 L1544.4,1551.3 L1547.7,1551.3 L1551.0,1551.3 L1554.3,1551.3 L1557.6,1551.3 L1560.9,1524.9 L1564.2,1551.3 L1567.5,1551.3 L1570.8,1524.9 L1574.1,1551.3 L1577.4,1551.3 L1580.7,1551.3 L1584.0,1551.3 L1587.3,1551.3 L1590.6,1551.3 L1593.9,1551.3 L1597.2,1524.9 L1600.5,1551.3 L1603.8,1524.9 L1607.1,1551.3 L1610.4,1551.3 L1613.7,1551.3 L1617.0,1551.3 L1620.3,1551.3 L1623.6,1524.9 L1626.9,1551.3 L1630.2,1551.3 L1633.5,1551.3 L1636.8,1524.9 L1640.1,1551.3 L1643.4,1551.3 L1646.7,1551.3 L1650.0,1524.9 L1653.3,1524.9 L1656.7,1524.9 L1660.0,1524.9 L1663.3,1524.9 L1666.6,1551.3 L1669.9,1551.3 L1673.2,1551.3 L1676.5,1551.3 L1679.8,1524.9 L1683.1,1551.3 L1686.4,1551.3 L1689.7,1524.9 L1693.0,1551.3 L1696.3,1524.9 L1699.6,1551.3 L1702.9,1524.9 L1706.2,1551.3 L1709.5,1551.3 L1712.8,1551.3 L1716.1,1551.3 L1719.4,1551.3 L1722.7,1551.3 L1726.0,1551.3 L1729.3,1551.3 L1732.6,1551.3 L1735.9,1551.3 L1739.2,1551.3 L1742.5,1551.3 L1745.8,1524.9 L1749.1,1551.3 L1752.4,1551.3 L1755.7,1551.3 L1759.0,1551.3 L1762.3,1551.3 L1765.6,1551.3 L1768.9,1524.9 L1772.2,1551.3 L1775.5,1551.3 L1778.8,1551.3 L1782.1,1551.3 L1785.4,1551.3 L1788.7,1551.3 L1792.0,1551.3 L1795.3,1551.3 L1798.6,1551.3 L1801.9,1551.3 L1805.2,1551.3 L1808.5,1551.3 L1811.8,1524.9 L1815.1,1551.3 L1818.4,1551.3 L1821.7,1551.3 L1825.0,1551.3 L1828.3,1551.3 L1831.6,1551.3 L1834.9,1551.3 L1838.2,1551.3 L1841.5,1524.9 L1844.8,1524.9 L1848.1,1551.3 L1851.4,1551.3 L1854.7,1551.3 L1858.0,1551.3 L1861.3,1551.3 L1864.6,1551.3 L1867.9,1524.9 L1871.2,1551.3 L1874.5,1524.9 L1877.8,1551.3 L1881.1,1551.3 L1884.4,1551.3 L1887.7,1551.3 L1891.0,1524.9 L1894.3,1551.3 L1897.6,1551.3 L1900.9,1524.9 L1904.2,1551.3 L1907.5,1551.3 L1910.8,1551.3 L1914.1,1551.3 L1917.4,1551.3 L1920.7,1551.3 L1924.0,1551.3 L1927.3,1551.3 L1930.7,1551.3 L1934.0,1551.3 L1937.3,1551.3 L1940.6,1551.3 L1943.9,1551.3 L1947.2,1551.3 L1950.5,1551.3 L1953.8,1551.3 L1957.1,1524.9 L1960.4,1551.3 L1963.7,1551.3 L1967.0,1551.3 L1970.3,1551.3 L1973.6,1551.3 L1976.9,1551.3 L1980.2,1551.3 L1983.5,1551.3 L1986.8,1551.3 L1990.1,1551.3 L1993.4,1551.3 L1996.7,1551.3 L2000.0,1524.9 L2003.3,1551.3 L2006.6,1551.3 L2009.9,1551.3 L2013.2,1551.3 L2016.5,1551.3 L2019.8,1551.3 L2023.1,1551.3 L2026.4,1551.3 L2029.7,1551.3 L2033.0,1551.3 L2036.3,1551.3 L2039.6,1524.9 L2042.9,1551.3 L2046.2,1551.3 L2049.5,1551.3 L2052.8,1551.3 L2056.1,1551.3 L2059.4,1524.9 L2062.7,1551.3 L2066.0,1551.3 L2069.3,1551.3 L2072.6,1551.3 L2075.9,1524.9 L2079.2,1551.3 L2082.5,1551.3 L2085.8,1551.3 L2089.1,1551.3 L2092.4,1551.3 L2095.7,1551.3 L2099.0,1551.3 L2102.3,1551.3 L2105.6,1551.3 L2108.9,1551.3 L2112.2,1551.3 L2115.5,1551.3 L2118.8,1551.3 L2122.1,1524.9 L2125.4,1551.3 L2128.7,1551.3 L2132.0,1551.3 L2135.3,1551.3 L2138.6,1551.3 L2141.9,1551.3 L2145.2,1551.3 L2148.5,1551.3 L2151.8,1551.3 L2155.1,1551.3 L2158.4,1551.3 L2161.7,1551.3 L2165.0,1551.3 L2168.3,1551.3 L2171.6,1551.3 L2174.9,1524.9 L2178.2,1551.3 L2181.5,1551.3 L2184.8,1551.3 L2188.1,1524.9 L2191.4,1551.3 L2194.7,1551.3 L2198.0,1551.3 L2201.3,1551.3 L2204.7,1551.3 L2208.0,1551.3 L2211.3,1524.9 L2214.6,1551.3 L2217.9,1551.3 L2221.2,1551.3 L2224.5,1551.3 L2227.8,1524.9 L2231.1,1551.3 L2234.4,1551.3 L2237.7,1551.3 L2241.0,1524.9 L2244.3,1551.3 L2247.6,1551.3 L2250.9,1524.9 L2254.2,1551.3 L2257.5,1551.3 L2260.8,1524.9 L2264.1,1551.3 L2267.4,1551.3 L2270.7,1551.3 L2274.0,1551.3 L2277.3,1524.9 L2280.6,1551.3 L2283.9,1551.3 L2287.2,1551.3 L2290.5,1524.9 L2293.8,1551.3 L2297.1,1551.3 L2300.4,1524.9 L2303.7,1551.3 L2307.0,1551.3 L2310.3,1551.3 L2313.6,1551.3 L2316.9,1524.9 L2320.2,1524.9 L2323.5,1551.3 L2326.8,1551.3 L2330.1,1551.3 L2333.4,1551.3 L2336.7,1551.3 L2340.0,1551.3 L2343.3,1551.3 L2346.6,1551.3 L2349.9,1551.3 L2353.2,1551.3 L2356.5,1551.3 L2359.8,1551.3 L2363.1,1551.3 L2366.4,1551.3 L2369.7,1551.3 L2373.0,1524.9 L2376.3,1551.3 L2379.6,1524.9 L2382.9,1551.3 L2386.2,1551.3 L2389.5,1551.3 L2392.8,1551.3 L2396.1,1551.3 L2399.4,1551.3 L2402.7,1551.3 L2406.0,1551.3 L2409.3,1551.3 L2412.6,1524.9 L2415.9,1551.3 L2419.2,1551.3 L2422.5,1524.9 L2425.8,1551.3 L2429.1,1551.3 L2432.4,1551.3 L2435.7,1551.3 L2439.0,1551.3 L2442.3,1551.3 L2445.6,1524.9 L2448.9,1551.3 L2452.2,1551.3 L2455.5,1524.9 L2458.8,1551.3 L2462.1,1551.3 L2465.4,1551.3 L2468.7,1551.3 L2472.0,1524.9 L2475.3,1551.3 L2478.6,1551.3 L2482.0,1551.3 L2485.3,1551.3 L2488.6,1551.3 L2491.9,1524.9 L2495.2,1551.3 L2498.5,1551.3 L2501.8,1551.3 L2505.1,1551.3 L2508.4,1551.3 L2511.7,1524.9 L2515.0,1551.3 L2518.3,1551.3 L2521.6,1551.3 L2524.9,1551.3 L2528.2,1524.9 L2531.5,1551.3 L2534.8,1551.3 L2538.1,1524.9 L2541.4,1551.3 L2544.7,1551.3 L2548.0,1551.3 L2551.3,1551.3 L2554.6,1551.3 L2557.9,1551.3 L2561.2,1551.3 L2564.5,1551.3 L2567.8,1551.3 L2571.1,1551.3 L2574.4,1551.3 L2577.7,1551.3 L2581.0,1551.3 L2584.3,1551.3 L2587.6,1551.3 L2590.9,1551.3 L2594.2,1551.3 L2597.5,1524.9 L2600.8,1551.3 L2604.1,1551.3 L2607.4,1551.3 L2610.7,1551.3 L2614.0,1551.3 L2617.3,1551.3 L2620.6,1551.3 L2623.9,1551.3 L2627.2,1551.3 L2630.5,1551.3 L2633.8,1551.3 L2637.1,1551.3 L2640.4,1551.3 L2643.7,1551.3 L2647.0,1551.3 L2650.3,1551.3 L2653.6,1551.3 L2656.9,1551.3 L2660.2,1551.3 L2663.5,1524.9 L2666.8,1551.3 L2670.1,1551.3 L2673.4,1551.3 L2676.7,1551.3 L2680.0,1551.3 L2683.3,1551.3 L2686.6,1551.3 L2689.9,1551.3 L2693.2,1551.3 L2696.5,1551.3 L2699.8,1551.3 L2703.1,1551.3 L2706.4,1551.3 L2709.7,1551.3 L2713.0,1551.3 L2716.3,1551.3 L2719.6,1551.3 L2722.9,1551.3 L2726.2,1551.3 L2729.5,1551.3 L2732.8,1524.9 L2736.1,1551.3 L2739.4,1551.3 L2742.7,1551.3 L2746.0,1551.3 L2749.3,1551.3 L2752.6,1551.3 L2756.0,1551.3 L2759.3,1551.3 L2762.6,1551.3 L2765.9,1524.9 L2769.2,1551.3 L2772.5,1551.3 L2775.8,1551.3 L2779.1,1551.3 L2782.4,1551.3 L2785.7,1551.3 L2789.0,1524.9 L2792.3,1524.9 L2795.6,1524.9 L2798.9,1551.3 L2802.2,1524.9 L2805.5,1551.3 L2808.8,1551.3 L2812.1,1551.3 L2815.4,1551.3 L2818.7,1551.3 L2822.0,1524.9 L2825.3,1551.3 L2828.6,1551.3 L2831.9,1551.3 L2835.2,1551.3 L2838.5,1551.3 L2841.8,1551.3 L2845.1,1551.3 L2848.4,1551.3 L2851.7,1551.3 L2855.0,1551.3 L2858.3,1551.3 L2861.6,1524.9 L2864.9,1551.3 L2868.2,1551.3 L2871.5,1551.3 L2874.8,1524.9 L2878.1,1551.3 L2881.4,1551.3 L2884.7,1551.3 L2888.0,1551.3 L2891.3,1551.3 L2894.6,1551.3 L2897.9,1551.3 L2901.2,1551.3 L2904.5,1551.3 L2907.8,1551.3 L2911.1,1524.9 L2914.4,1524.9 L2917.7,1524.9 L2921.0,1524.9 L2924.3,1524.9 L2927.6,1524.9 L2930.9,1551.3 L2934.2,1551.3 L2937.5,1551.3 L2940.8,1551.3 L2944.1,1551.3 L2947.4,1551.3 L2950.7,1551.3 L2954.0,1551.3 L2957.3,1551.3 L2960.6,1524.9 L2963.9,1524.9 L2967.2,1524.9 L2970.5,1524.9 L2973.8,1524.9 L2977.1,1551.3 L2980.4,1551.3 L2983.7,1551.3 L2987.0,1551.3 L2990.3,1524.9 L2993.6,1524.9 L2996.9,1524.9 L3000.2,1524.9 L3003.5,1524.9 L3006.8,1524.9 L3010.1,1524.9 L3013.4,1524.9 L3016.7,1524.9 L3020.0,1524.9 L3023.3,1551.3 L3026.6,1551.3 L3030.0,1551.3 L3033.3,1551.3 L3036.6,1524.9 L3039.9,1551.3 L3043.2,1524.9 L3046.5,1551.3 L3049.8,1551.3 L3053.1,1551.3 L3056.4,1551.3 L3059.7,1551.3 L3063.0,1524.9 L3066.3,1551.3 L3069.6,1551.3 L3072.9,1524.9 L3076.2,1551.3 L3079.5,1551.3 L3082.8,1551.3 L3086.1,1551.3 L3089.4,1524.9 L3092.7,1524.9 L3096.0,1524.9 L3099.3,1524.9 L3102.6,1524.9 L3105.9,1524.9 L3109.2,1524.9 L3112.5,1524.9" fill="none" stroke="#5bc86b" stroke-width="4" stroke-linejoin="round" stroke-linecap="butt"/><circle cx="141.4" cy="1630.5" r="3.7" fill="#fff" stroke="#5bc86b" stroke-width="4"/><circle cx="303.2" cy="1524.9" r="3.7" fill="#fff" stroke="#5bc86b" stroke-width="4"/><circle cx="464.9" cy="1524.9" r="3.7" fill="#fff" stroke="#5bc86b" stroke-width="4"/><circle cx="626.7" cy="1551.3" r="3.7" fill="#fff" stroke="#5bc86b" stroke-width="4"/><circle cx="788.4" cy="1524.9" r="3.7" fill="#fff" stroke="#5bc86b" stroke-width="4"/><circle cx="950.2" cy="1524.9" r="3.7" fill="#fff" stroke="#5bc86b" stroke-width="4"/><circle cx="1112.0" cy="1524.9" r="3.7" fill="#fff" stroke="#5bc86b" stroke-width="4"/><circle cx="1273.7" cy="1524.9" r="3.7" fill="#fff" stroke="#5bc86b" stroke-width="4"/><circle cx="1435.5" cy="1551.3" r="3.7" fill="#fff" stroke="#5bc86b" stroke-width="4"/><circle cx="1597.2" cy="1524.9" r="3.7" fill="#fff" stroke="#5bc86b" stroke-width="4"/><circle cx="1759.0" cy="1551.3" r="3.7" fill="#fff" stroke="#5bc86b" stroke-width="4"/><circle cx="1920.7" cy="1551.3" r="3.7" fill="#fff" stroke="#5bc86b" stroke-width="4"/><circle cx="2082.5" cy="1551.3" r="3.7" fill="#fff" stroke="#5bc86b" stroke-width="4"/><circle cx="2244.3" cy="1551.3" r="3.7" fill="#fff" stroke="#5bc86b" stroke-width="4"/><circle cx="2406.0" cy="1551.3" r="3.7" fill="#fff" stroke="#5bc86b" stroke-width="4"/><circle cx="2567.8" cy="1551.3" r="3.7" fill="#fff" stroke="#5bc86b" stroke-width="4"/><circle cx="2729.5" cy="1551.3" r="3.7" fill="#fff" stroke="#5bc86b" stroke-width="4"/><circle cx="2891.3" cy="1551.3" r="3.7" fill="#fff" stroke="#5bc86b" stroke-width="4"/><circle cx="3053.1" cy="1551.3" r="3.7" fill="#fff" stroke="#5bc86b" stroke-width="4"/></svg>
<div class="abs" style="left:0;top:1645px;width:3214px;height:1px;background:#2f3b35;"></div>
<svg class="abs" style="left:0;top:1631px" width="15" height="15"><path d="M0,0 V15 H15 A15,15 0 0 1 0,0 Z" fill="#c9c9cb"/></svg>
<svg class="abs" style="left:3199px;top:1631px" width="15" height="15"><path d="M15,0 V15 H0 A15,15 0 0 0 15,0 Z" fill="#c9c9cb"/></svg>
</body></html>
